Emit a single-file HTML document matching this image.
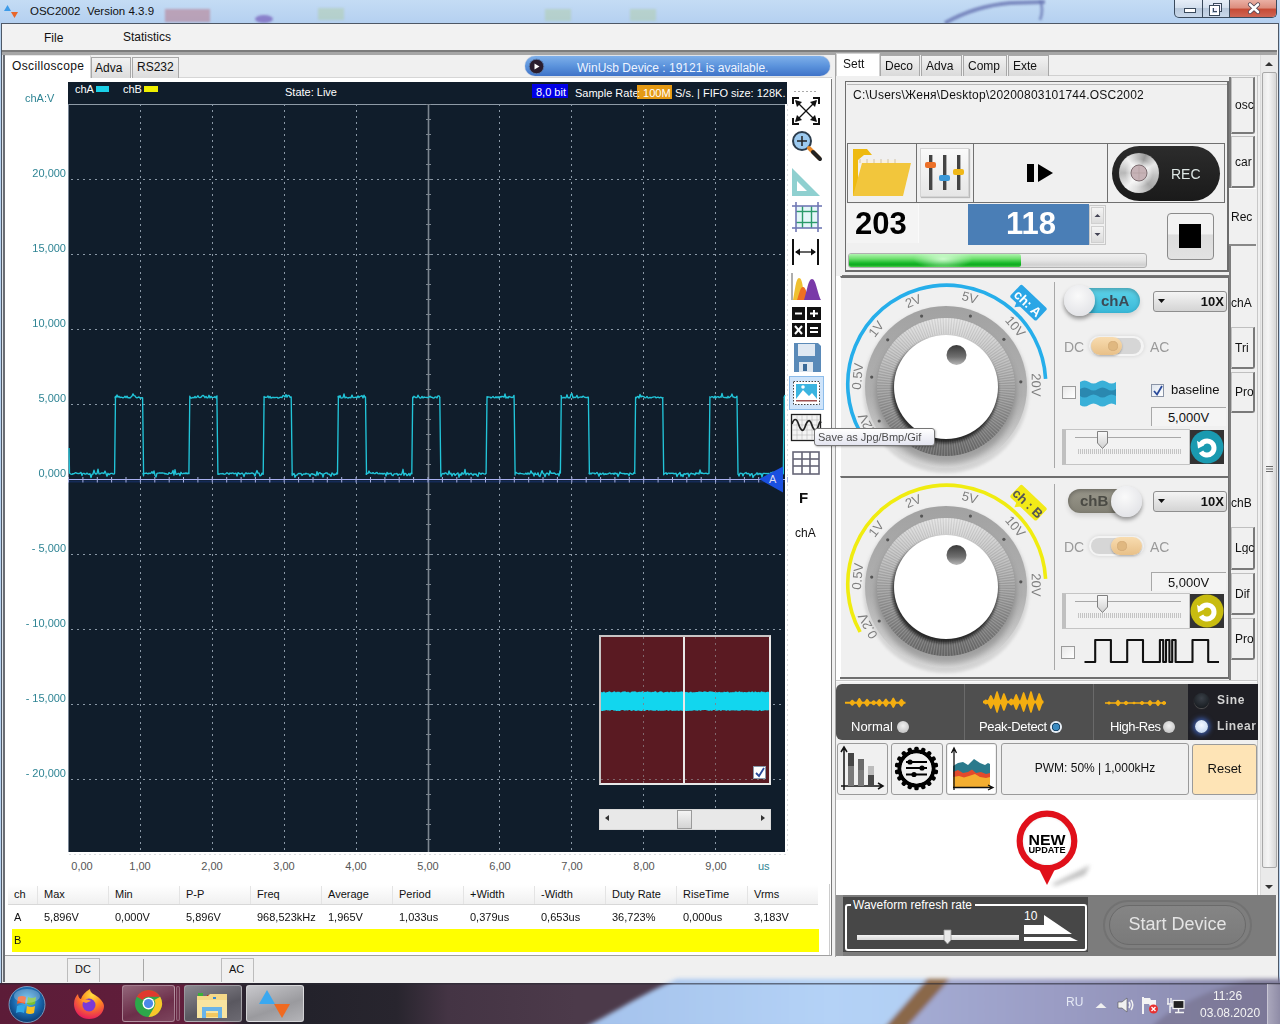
<!DOCTYPE html>
<html><head><meta charset="utf-8">
<style>
*{box-sizing:border-box;margin:0;padding:0}
html,body{width:1280px;height:1024px;overflow:hidden;background:#b6d2f0;font-family:"Liberation Sans",sans-serif;font-size:12px;color:#111}
.a{position:absolute}
.t{position:absolute;white-space:nowrap;line-height:1}
svg{position:absolute;overflow:visible}
</style></head><body>

<div class="a" style="left:0px;top:0px;width:1280px;height:24px;background:linear-gradient(180deg,#c4dcf4 0%,#b4d0f0 100%)"></div>
<svg style="left:0;top:0" width="1280" height="24"><defs><filter id="bl"><feGaussianBlur stdDeviation="1.2"/></filter></defs><g filter="url(#bl)"><rect x="165" y="9" width="45" height="13" fill="#b87888" opacity="0.55"/><ellipse cx="264" cy="19" rx="9" ry="4" fill="#6a4ab0" opacity="0.6"/><rect x="318" y="8" width="26" height="12" fill="#b0cca8" opacity="0.5"/><rect x="545" y="9" width="26" height="12" fill="#b0cca8" opacity="0.5"/><rect x="630" y="9" width="26" height="12" fill="#b0cca8" opacity="0.5"/><path d="M945 23 Q975 6 1010 3 L1045 2" stroke="#6a78b4" stroke-width="4" fill="none" opacity="0.8"/><path d="M1040 0 Q1044 10 1040 20" stroke="#6a78b4" stroke-width="3" fill="none" opacity="0.7"/></g></svg>
<svg style="left:2px;top:4px" width="18" height="18"><path d="M2 7 L5.5 1 L9 7Z" fill="#3d9be9"/><path d="M9 8 L12.5 14 L16 8Z" fill="#e8662a"/></svg>
<div class="t" style="left:30px;top:6px;font-size:11.5px;color:#111;font-weight:normal;">OSC2002&nbsp; Version 4.3.9</div>
<div class="a" style="left:1174px;top:0;width:103px;height:18px;border:1px solid #3a4a5c;border-top:none;border-radius:0 0 5px 5px;overflow:hidden;background:linear-gradient(180deg,#e6eef8 0%,#d4e0ee 45%,#b9c9dc 50%,#c9d8ea 100%)">
<div class="a" style="left:27px;top:0;width:1px;height:18px;background:#3a4a5c"></div>
<div class="a" style="left:54px;top:0;width:48px;height:18px;background:linear-gradient(180deg,#eab0a4 0%,#dc8c7c 45%,#c64a34 50%,#d06a58 100%);border-left:1px solid #3a4a5c"></div>
<div class="a" style="left:9px;top:8px;width:12px;height:5px;background:#fff;border:1px solid #3a4a5c"></div>
<div class="a" style="left:38px;top:3px;width:9px;height:9px;border:1px solid #3a4a5c;background:#eef"></div>
<div class="a" style="left:35px;top:6px;width:9px;height:9px;border:2px solid #fff;outline:1px solid #3a4a5c;background:transparent"></div>
<svg style="left:72px;top:2px" width="14" height="13"><path d="M3 2.5 L11 10 M11 2.5 L3 10" stroke="#4a4050" stroke-width="4.2" stroke-linecap="round"/><path d="M3 2.5 L11 10 M11 2.5 L3 10" stroke="#fff" stroke-width="2.6" stroke-linecap="round"/></svg>
</div>
<div class="a" style="left:1px;top:23px;width:1278px;height:961px;background:#f0f0f0;border:1px solid #4e5866;border-bottom:none"></div>
<div class="a" style="left:2px;top:24px;width:1276px;height:26px;background:#f2f2f2"></div>
<div class="t" style="left:44px;top:32px;font-size:12px;color:#111;font-weight:normal;">File</div>
<div class="t" style="left:123px;top:31px;font-size:12px;color:#111;font-weight:normal;">Statistics</div>
<div class="a" style="left:2px;top:50px;width:1275px;height:2px;background:#7c7c7c"></div>
<div class="a" style="left:2px;top:52px;width:1275px;height:3px;background:#a6a6a6"></div>
<div class="a" style="left:2px;top:55px;width:1px;height:927px;background:#dde2e8"></div>
<div class="a" style="left:3px;top:55px;width:2px;height:927px;background:#6a6e74"></div>
<div class="a" style="left:5px;top:77px;width:827px;height:878px;background:#fff"></div>
<div class="a" style="left:5px;top:55px;width:86px;height:23px;background:#fff;border-right:1px solid #d6d6d6;border-top:1px solid #e6e6e6"></div>
<div class="t" style="left:12px;top:60px;font-size:12px;color:#111;font-weight:normal;letter-spacing:0.35px">Oscilloscope</div>
<div class="a" style="left:91px;top:57px;width:40px;height:21px;background:linear-gradient(180deg,#f2f2f2,#dcdcdc);border:1px solid #a8a8a8;border-bottom:none"></div>
<div class="t" style="left:95px;top:62px;font-size:12px;color:#111;font-weight:normal;">Adva</div>
<div class="a" style="left:132px;top:57px;width:47px;height:21px;background:linear-gradient(180deg,#f2f2f2,#dcdcdc);border:1px solid #a8a8a8;border-bottom:none"></div>
<div class="t" style="left:137px;top:61px;font-size:12px;color:#111;font-weight:normal;">RS232</div>
<div class="a" style="left:179px;top:77px;width:653px;height:1px;background:#d6d6d6"></div>
<div class="a" style="left:525px;top:56px;width:305px;height:20px;border-radius:10px;background:linear-gradient(180deg,#7fb0ea 0%,#5b93dc 50%,#3f73c8 100%);box-shadow:0 0 1px #4a6fb0"></div>
<svg style="left:528px;top:58px" width="17" height="17"><circle cx="8.5" cy="8.5" r="7.3" fill="#2a1d2e" stroke="#5577aa" stroke-width="1"/><path d="M6.5 5.5 L11.5 8.5 L6.5 11.5Z" fill="#fff"/></svg>
<div class="t" style="left:577px;top:62px;font-size:12px;color:#eef4ff;font-weight:normal;">WinUsb Device : 19121 is available.</div>
<div class="a" style="left:831px;top:79px;width:1px;height:876px;background:#7a7a7a"></div>
<div class="a" style="left:835px;top:53px;width:1px;height:904px;background:#a4a4a4"></div>
<div class="a" style="left:5px;top:955px;width:827px;height:27px;background:#f0f0f0;border-top:1px solid #a0a0a0"></div>
<div class="a" style="left:67px;top:958px;width:33px;height:24px;background:#f0f0f0;border:1px solid #bcbcbc;border-bottom:none"></div>
<div class="t" style="left:75px;top:964px;font-size:11px;color:#111;font-weight:normal;">DC</div>
<div class="a" style="left:143px;top:959px;width:1px;height:22px;background:#a8a8a8"></div>
<div class="a" style="left:221px;top:958px;width:33px;height:24px;background:#f0f0f0;border:1px solid #bcbcbc;border-bottom:none"></div>
<div class="t" style="left:229px;top:964px;font-size:11px;color:#111;font-weight:normal;">AC</div>
<div class="a" style="left:68px;top:82px;width:719px;height:22px;background:#101d2b"></div>
<div class="a" style="left:68px;top:104px;width:717px;height:748px;background:#101d2b"></div>
<div class="a" style="left:68px;top:104px;width:1px;height:748px;background:#7a8796"></div>
<div class="a" style="left:69px;top:104px;width:716px;height:1px;background:#8e9aa6"></div>
<svg style="left:0;top:0" width="1280" height="1024"><g stroke="#dadde0" stroke-width="1" stroke-dasharray="2 3"><line x1="69" y1="854.5" x2="787" y2="854.5"/><line x1="787.5" y1="104" x2="787.5" y2="854"/></g></svg>
<div class="t" style="left:75px;top:84px;font-size:11px;color:#fff;font-weight:normal;">chA</div>
<div class="a" style="left:96px;top:86px;width:13px;height:6px;background:#1ad0e8"></div>
<div class="t" style="left:123px;top:84px;font-size:11px;color:#fff;font-weight:normal;">chB</div>
<div class="a" style="left:144px;top:86px;width:14px;height:6px;background:#f0f000"></div>
<div class="t" style="left:285px;top:87px;font-size:11px;color:#fff;font-weight:normal;">State: Live</div>
<div class="a" style="left:532px;top:84px;width:36px;height:14px;background:#0000e6"></div>
<div class="t" style="left:536px;top:87px;font-size:11px;color:#fff;font-weight:normal;">8,0 bit</div>
<div class="t" style="left:575px;top:88px;font-size:11px;color:#fff;font-weight:normal;">Sample Rate</div>
<div class="a" style="left:637px;top:85px;width:35px;height:14px;background:#e59a14"></div>
<div class="t" style="left:637px;top:88px;font-size:11px;color:#fff;font-weight:normal;">:&nbsp;100M</div>
<div class="t" style="left:675px;top:88px;font-size:11px;color:#fff;font-weight:normal;">S/s. | FIFO size: 128K.</div>
<svg style="left:0;top:0" width="1280" height="1024"><line x1="140.5" y1="104" x2="140.5" y2="852" stroke="#8a98a6" stroke-width="1" stroke-dasharray="2 4"/><line x1="212.5" y1="104" x2="212.5" y2="852" stroke="#8a98a6" stroke-width="1" stroke-dasharray="2 4"/><line x1="284.5" y1="104" x2="284.5" y2="852" stroke="#8a98a6" stroke-width="1" stroke-dasharray="2 4"/><line x1="356.5" y1="104" x2="356.5" y2="852" stroke="#8a98a6" stroke-width="1" stroke-dasharray="2 4"/><line x1="428.5" y1="104" x2="428.5" y2="852" stroke="#7c8690" stroke-width="1.6"/><line x1="426.0" y1="104.5" x2="431.0" y2="104.5" stroke="#7c8690" stroke-width="1"/><line x1="426.0" y1="119.5" x2="431.0" y2="119.5" stroke="#7c8690" stroke-width="1"/><line x1="426.0" y1="134.5" x2="431.0" y2="134.5" stroke="#7c8690" stroke-width="1"/><line x1="426.0" y1="149.5" x2="431.0" y2="149.5" stroke="#7c8690" stroke-width="1"/><line x1="426.0" y1="164.5" x2="431.0" y2="164.5" stroke="#7c8690" stroke-width="1"/><line x1="426.0" y1="179.5" x2="431.0" y2="179.5" stroke="#7c8690" stroke-width="1"/><line x1="426.0" y1="194.5" x2="431.0" y2="194.5" stroke="#7c8690" stroke-width="1"/><line x1="426.0" y1="209.5" x2="431.0" y2="209.5" stroke="#7c8690" stroke-width="1"/><line x1="426.0" y1="224.5" x2="431.0" y2="224.5" stroke="#7c8690" stroke-width="1"/><line x1="426.0" y1="239.5" x2="431.0" y2="239.5" stroke="#7c8690" stroke-width="1"/><line x1="426.0" y1="254.5" x2="431.0" y2="254.5" stroke="#7c8690" stroke-width="1"/><line x1="426.0" y1="269.5" x2="431.0" y2="269.5" stroke="#7c8690" stroke-width="1"/><line x1="426.0" y1="284.5" x2="431.0" y2="284.5" stroke="#7c8690" stroke-width="1"/><line x1="426.0" y1="299.5" x2="431.0" y2="299.5" stroke="#7c8690" stroke-width="1"/><line x1="426.0" y1="314.5" x2="431.0" y2="314.5" stroke="#7c8690" stroke-width="1"/><line x1="426.0" y1="329.5" x2="431.0" y2="329.5" stroke="#7c8690" stroke-width="1"/><line x1="426.0" y1="344.5" x2="431.0" y2="344.5" stroke="#7c8690" stroke-width="1"/><line x1="426.0" y1="359.5" x2="431.0" y2="359.5" stroke="#7c8690" stroke-width="1"/><line x1="426.0" y1="374.5" x2="431.0" y2="374.5" stroke="#7c8690" stroke-width="1"/><line x1="426.0" y1="389.5" x2="431.0" y2="389.5" stroke="#7c8690" stroke-width="1"/><line x1="426.0" y1="404.5" x2="431.0" y2="404.5" stroke="#7c8690" stroke-width="1"/><line x1="426.0" y1="419.5" x2="431.0" y2="419.5" stroke="#7c8690" stroke-width="1"/><line x1="426.0" y1="434.5" x2="431.0" y2="434.5" stroke="#7c8690" stroke-width="1"/><line x1="426.0" y1="449.5" x2="431.0" y2="449.5" stroke="#7c8690" stroke-width="1"/><line x1="426.0" y1="464.5" x2="431.0" y2="464.5" stroke="#7c8690" stroke-width="1"/><line x1="426.0" y1="479.5" x2="431.0" y2="479.5" stroke="#7c8690" stroke-width="1"/><line x1="426.0" y1="494.5" x2="431.0" y2="494.5" stroke="#7c8690" stroke-width="1"/><line x1="426.0" y1="509.5" x2="431.0" y2="509.5" stroke="#7c8690" stroke-width="1"/><line x1="426.0" y1="524.5" x2="431.0" y2="524.5" stroke="#7c8690" stroke-width="1"/><line x1="426.0" y1="539.5" x2="431.0" y2="539.5" stroke="#7c8690" stroke-width="1"/><line x1="426.0" y1="554.5" x2="431.0" y2="554.5" stroke="#7c8690" stroke-width="1"/><line x1="426.0" y1="569.5" x2="431.0" y2="569.5" stroke="#7c8690" stroke-width="1"/><line x1="426.0" y1="584.5" x2="431.0" y2="584.5" stroke="#7c8690" stroke-width="1"/><line x1="426.0" y1="599.5" x2="431.0" y2="599.5" stroke="#7c8690" stroke-width="1"/><line x1="426.0" y1="614.5" x2="431.0" y2="614.5" stroke="#7c8690" stroke-width="1"/><line x1="426.0" y1="629.5" x2="431.0" y2="629.5" stroke="#7c8690" stroke-width="1"/><line x1="426.0" y1="644.5" x2="431.0" y2="644.5" stroke="#7c8690" stroke-width="1"/><line x1="426.0" y1="659.5" x2="431.0" y2="659.5" stroke="#7c8690" stroke-width="1"/><line x1="426.0" y1="674.5" x2="431.0" y2="674.5" stroke="#7c8690" stroke-width="1"/><line x1="426.0" y1="689.5" x2="431.0" y2="689.5" stroke="#7c8690" stroke-width="1"/><line x1="426.0" y1="704.5" x2="431.0" y2="704.5" stroke="#7c8690" stroke-width="1"/><line x1="426.0" y1="719.5" x2="431.0" y2="719.5" stroke="#7c8690" stroke-width="1"/><line x1="426.0" y1="734.5" x2="431.0" y2="734.5" stroke="#7c8690" stroke-width="1"/><line x1="426.0" y1="749.5" x2="431.0" y2="749.5" stroke="#7c8690" stroke-width="1"/><line x1="426.0" y1="764.5" x2="431.0" y2="764.5" stroke="#7c8690" stroke-width="1"/><line x1="426.0" y1="779.5" x2="431.0" y2="779.5" stroke="#7c8690" stroke-width="1"/><line x1="426.0" y1="794.5" x2="431.0" y2="794.5" stroke="#7c8690" stroke-width="1"/><line x1="426.0" y1="809.5" x2="431.0" y2="809.5" stroke="#7c8690" stroke-width="1"/><line x1="426.0" y1="824.5" x2="431.0" y2="824.5" stroke="#7c8690" stroke-width="1"/><line x1="426.0" y1="839.5" x2="431.0" y2="839.5" stroke="#7c8690" stroke-width="1"/><line x1="499.5" y1="104" x2="499.5" y2="852" stroke="#8a98a6" stroke-width="1" stroke-dasharray="2 4"/><line x1="571.5" y1="104" x2="571.5" y2="852" stroke="#8a98a6" stroke-width="1" stroke-dasharray="2 4"/><line x1="643.5" y1="104" x2="643.5" y2="852" stroke="#8a98a6" stroke-width="1" stroke-dasharray="2 4"/><line x1="715.5" y1="104" x2="715.5" y2="852" stroke="#8a98a6" stroke-width="1" stroke-dasharray="2 4"/><line x1="71" y1="179.5" x2="785" y2="179.5" stroke="#8a98a6" stroke-width="1" stroke-dasharray="2 4"/><line x1="71" y1="254.5" x2="785" y2="254.5" stroke="#8a98a6" stroke-width="1" stroke-dasharray="2 4"/><line x1="71" y1="329.5" x2="785" y2="329.5" stroke="#8a98a6" stroke-width="1" stroke-dasharray="2 4"/><line x1="71" y1="404.5" x2="785" y2="404.5" stroke="#8a98a6" stroke-width="1" stroke-dasharray="2 4"/><line x1="71" y1="554.5" x2="785" y2="554.5" stroke="#8a98a6" stroke-width="1" stroke-dasharray="2 4"/><line x1="71" y1="629.5" x2="785" y2="629.5" stroke="#8a98a6" stroke-width="1" stroke-dasharray="2 4"/><line x1="71" y1="704.5" x2="785" y2="704.5" stroke="#8a98a6" stroke-width="1" stroke-dasharray="2 4"/><line x1="71" y1="779.5" x2="785" y2="779.5" stroke="#8a98a6" stroke-width="1" stroke-dasharray="2 4"/><line x1="69" y1="481.5" x2="785" y2="481.5" stroke="#1b3a8a" stroke-width="2" opacity="0.45"/><line x1="69" y1="479.5" x2="785" y2="479.5" stroke="#a8b0f0" stroke-width="1.2"/><line x1="68.5" y1="477.0" x2="68.5" y2="482.5" stroke="#a8b0e0" stroke-width="1"/><line x1="82.9" y1="477.0" x2="82.9" y2="482.5" stroke="#a8b0e0" stroke-width="1"/><line x1="97.3" y1="477.0" x2="97.3" y2="482.5" stroke="#a8b0e0" stroke-width="1"/><line x1="111.6" y1="477.0" x2="111.6" y2="482.5" stroke="#a8b0e0" stroke-width="1"/><line x1="126.0" y1="477.0" x2="126.0" y2="482.5" stroke="#a8b0e0" stroke-width="1"/><line x1="140.4" y1="477.0" x2="140.4" y2="482.5" stroke="#a8b0e0" stroke-width="1"/><line x1="154.8" y1="477.0" x2="154.8" y2="482.5" stroke="#a8b0e0" stroke-width="1"/><line x1="169.2" y1="477.0" x2="169.2" y2="482.5" stroke="#a8b0e0" stroke-width="1"/><line x1="183.5" y1="477.0" x2="183.5" y2="482.5" stroke="#a8b0e0" stroke-width="1"/><line x1="197.9" y1="477.0" x2="197.9" y2="482.5" stroke="#a8b0e0" stroke-width="1"/><line x1="212.3" y1="477.0" x2="212.3" y2="482.5" stroke="#a8b0e0" stroke-width="1"/><line x1="226.7" y1="477.0" x2="226.7" y2="482.5" stroke="#a8b0e0" stroke-width="1"/><line x1="241.1" y1="477.0" x2="241.1" y2="482.5" stroke="#a8b0e0" stroke-width="1"/><line x1="255.4" y1="477.0" x2="255.4" y2="482.5" stroke="#a8b0e0" stroke-width="1"/><line x1="269.8" y1="477.0" x2="269.8" y2="482.5" stroke="#a8b0e0" stroke-width="1"/><line x1="284.2" y1="477.0" x2="284.2" y2="482.5" stroke="#a8b0e0" stroke-width="1"/><line x1="298.6" y1="477.0" x2="298.6" y2="482.5" stroke="#a8b0e0" stroke-width="1"/><line x1="313.0" y1="477.0" x2="313.0" y2="482.5" stroke="#a8b0e0" stroke-width="1"/><line x1="327.3" y1="477.0" x2="327.3" y2="482.5" stroke="#a8b0e0" stroke-width="1"/><line x1="341.7" y1="477.0" x2="341.7" y2="482.5" stroke="#a8b0e0" stroke-width="1"/><line x1="356.1" y1="477.0" x2="356.1" y2="482.5" stroke="#a8b0e0" stroke-width="1"/><line x1="370.5" y1="477.0" x2="370.5" y2="482.5" stroke="#a8b0e0" stroke-width="1"/><line x1="384.9" y1="477.0" x2="384.9" y2="482.5" stroke="#a8b0e0" stroke-width="1"/><line x1="399.2" y1="477.0" x2="399.2" y2="482.5" stroke="#a8b0e0" stroke-width="1"/><line x1="413.6" y1="477.0" x2="413.6" y2="482.5" stroke="#a8b0e0" stroke-width="1"/><line x1="428.0" y1="477.0" x2="428.0" y2="482.5" stroke="#a8b0e0" stroke-width="1"/><line x1="442.4" y1="477.0" x2="442.4" y2="482.5" stroke="#a8b0e0" stroke-width="1"/><line x1="456.8" y1="477.0" x2="456.8" y2="482.5" stroke="#a8b0e0" stroke-width="1"/><line x1="471.1" y1="477.0" x2="471.1" y2="482.5" stroke="#a8b0e0" stroke-width="1"/><line x1="485.5" y1="477.0" x2="485.5" y2="482.5" stroke="#a8b0e0" stroke-width="1"/><line x1="499.9" y1="477.0" x2="499.9" y2="482.5" stroke="#a8b0e0" stroke-width="1"/><line x1="514.3" y1="477.0" x2="514.3" y2="482.5" stroke="#a8b0e0" stroke-width="1"/><line x1="528.7" y1="477.0" x2="528.7" y2="482.5" stroke="#a8b0e0" stroke-width="1"/><line x1="543.0" y1="477.0" x2="543.0" y2="482.5" stroke="#a8b0e0" stroke-width="1"/><line x1="557.4" y1="477.0" x2="557.4" y2="482.5" stroke="#a8b0e0" stroke-width="1"/><line x1="571.8" y1="477.0" x2="571.8" y2="482.5" stroke="#a8b0e0" stroke-width="1"/><line x1="586.2" y1="477.0" x2="586.2" y2="482.5" stroke="#a8b0e0" stroke-width="1"/><line x1="600.6" y1="477.0" x2="600.6" y2="482.5" stroke="#a8b0e0" stroke-width="1"/><line x1="614.9" y1="477.0" x2="614.9" y2="482.5" stroke="#a8b0e0" stroke-width="1"/><line x1="629.3" y1="477.0" x2="629.3" y2="482.5" stroke="#a8b0e0" stroke-width="1"/><line x1="643.7" y1="477.0" x2="643.7" y2="482.5" stroke="#a8b0e0" stroke-width="1"/><line x1="658.1" y1="477.0" x2="658.1" y2="482.5" stroke="#a8b0e0" stroke-width="1"/><line x1="672.5" y1="477.0" x2="672.5" y2="482.5" stroke="#a8b0e0" stroke-width="1"/><line x1="686.8" y1="477.0" x2="686.8" y2="482.5" stroke="#a8b0e0" stroke-width="1"/><line x1="701.2" y1="477.0" x2="701.2" y2="482.5" stroke="#a8b0e0" stroke-width="1"/><line x1="715.6" y1="477.0" x2="715.6" y2="482.5" stroke="#a8b0e0" stroke-width="1"/><line x1="730.0" y1="477.0" x2="730.0" y2="482.5" stroke="#a8b0e0" stroke-width="1"/><line x1="744.4" y1="477.0" x2="744.4" y2="482.5" stroke="#a8b0e0" stroke-width="1"/><line x1="758.7" y1="477.0" x2="758.7" y2="482.5" stroke="#a8b0e0" stroke-width="1"/><line x1="773.1" y1="477.0" x2="773.1" y2="482.5" stroke="#a8b0e0" stroke-width="1"/><line x1="787.5" y1="477.0" x2="787.5" y2="482.5" stroke="#a8b0e0" stroke-width="1"/><path d="M69.0 448.0 L69.5 473.0 L70.0 473.5 L71.0 474.1 L72.0 474.4 L73.0 473.6 L74.0 473.8 L75.0 473.0 L76.0 472.7 L77.0 473.4 L78.0 473.5 L79.0 473.6 L80.0 473.2 L81.0 472.4 L82.0 475.6 L83.0 473.3 L84.0 473.3 L85.0 474.1 L86.0 474.1 L87.0 473.1 L88.0 474.0 L89.0 474.3 L90.0 473.7 L91.0 477.6 L92.0 474.3 L93.0 474.0 L94.0 470.2 L95.0 473.4 L96.0 474.1 L97.0 473.7 L98.0 469.2 L99.0 473.9 L100.0 473.9 L101.0 473.2 L102.0 472.9 L103.0 473.2 L104.0 473.5 L105.0 471.1 L106.0 473.4 L107.0 476.2 L108.0 473.3 L109.0 474.7 L110.0 473.9 L111.0 473.4 L112.0 473.3 L113.0 473.9 L114.0 474.1 L114.6 473.2 L115.5 396.3 L115.0 397.9 L116.0 397.6 L117.0 395.0 L118.0 397.1 L119.0 396.3 L120.0 397.6 L121.0 397.2 L122.0 397.4 L123.0 397.9 L124.0 397.4 L125.0 396.2 L126.0 397.7 L127.0 396.1 L128.0 397.8 L129.0 397.6 L130.0 398.0 L131.0 397.1 L132.0 396.0 L133.0 393.9 L134.0 395.7 L135.0 395.9 L136.0 397.4 L137.0 397.8 L138.0 397.4 L139.0 397.0 L140.0 398.0 L141.0 397.7 L142.0 398.0 L142.6 397.7 L143.6 475.8 L143.0 473.4 L144.0 473.4 L145.0 473.5 L146.0 473.0 L147.0 473.4 L148.0 473.9 L149.0 473.1 L150.0 473.6 L151.0 473.2 L152.0 471.7 L153.0 473.5 L154.0 470.9 L155.0 475.5 L156.0 477.0 L157.0 473.3 L158.0 473.1 L159.0 473.0 L160.0 472.8 L161.0 473.2 L162.0 472.8 L163.0 473.0 L164.0 473.1 L165.0 473.9 L166.0 473.5 L167.0 474.1 L168.0 474.4 L169.0 472.7 L170.0 473.3 L171.0 473.6 L172.0 473.1 L173.0 470.5 L174.0 475.2 L175.0 469.7 L176.0 474.2 L177.0 474.2 L178.0 473.5 L179.0 473.4 L180.0 475.6 L181.0 472.3 L182.0 473.7 L183.0 473.8 L184.0 473.1 L185.0 473.8 L186.0 472.8 L187.0 473.9 L188.0 472.9 L189.0 473.4 L188.9 473.7 L189.8 396.1 L190.0 396.9 L191.0 398.0 L192.0 398.0 L193.0 397.4 L194.0 397.9 L195.0 396.4 L196.0 397.8 L197.0 397.0 L198.0 395.8 L199.0 397.3 L200.0 397.6 L201.0 397.2 L202.0 396.0 L203.0 395.4 L204.0 396.1 L205.0 397.7 L206.0 396.4 L207.0 397.9 L208.0 397.8 L209.0 395.3 L210.0 397.9 L211.0 396.4 L212.0 397.6 L213.0 397.4 L214.0 397.4 L215.0 396.5 L216.0 398.0 L217.0 395.9 L216.9 397.7 L217.9 474.2 L218.0 474.3 L219.0 474.0 L220.0 474.0 L221.0 473.5 L222.0 474.0 L223.0 473.4 L224.0 474.3 L225.0 474.2 L226.0 473.6 L227.0 472.7 L228.0 473.4 L229.0 474.3 L230.0 473.0 L231.0 473.5 L232.0 473.1 L233.0 472.9 L234.0 473.8 L235.0 473.4 L236.0 473.2 L237.0 476.0 L238.0 472.7 L239.0 473.3 L240.0 474.1 L241.0 473.7 L242.0 473.0 L243.0 473.9 L244.0 476.5 L245.0 473.7 L246.0 472.8 L247.0 473.9 L248.0 473.2 L249.0 473.7 L250.0 473.5 L251.0 473.4 L252.0 472.9 L253.0 473.3 L254.0 473.9 L255.0 476.1 L256.0 472.9 L257.0 470.5 L258.0 473.2 L259.0 473.1 L260.0 475.9 L261.0 475.4 L262.0 473.1 L263.0 474.4 L263.2 473.9 L264.1 396.4 L264.0 398.0 L265.0 397.1 L266.0 397.3 L267.0 397.2 L268.0 396.0 L269.0 397.9 L270.0 396.4 L271.0 398.1 L272.0 397.5 L273.0 397.3 L274.0 397.5 L275.0 397.7 L276.0 397.4 L277.0 397.3 L278.0 398.1 L279.0 398.0 L280.0 397.3 L281.0 397.1 L282.0 397.6 L283.0 395.5 L284.0 395.9 L285.0 397.0 L286.0 394.6 L287.0 397.2 L288.0 395.3 L289.0 395.4 L290.0 397.3 L291.0 396.8 L291.2 397.1 L292.2 475.5 L292.0 473.4 L293.0 474.4 L294.0 473.4 L295.0 477.3 L296.0 475.1 L297.0 475.1 L298.0 473.8 L299.0 473.3 L300.0 473.6 L301.0 473.5 L302.0 475.5 L303.0 474.4 L304.0 473.9 L305.0 474.2 L306.0 473.2 L307.0 473.9 L308.0 473.9 L309.0 474.2 L310.0 476.4 L311.0 474.1 L312.0 473.6 L313.0 474.5 L314.0 474.1 L315.0 475.3 L316.0 475.7 L317.0 471.6 L318.0 475.1 L319.0 473.0 L320.0 472.7 L321.0 473.9 L322.0 473.6 L323.0 477.1 L324.0 473.7 L325.0 473.4 L326.0 473.0 L327.0 472.8 L328.0 474.2 L329.0 474.1 L330.0 474.9 L331.0 476.3 L332.0 472.9 L333.0 473.8 L334.0 475.2 L335.0 474.0 L336.0 474.5 L337.0 472.5 L337.5 473.9 L338.4 396.1 L338.0 396.9 L339.0 397.7 L340.0 395.6 L341.0 398.1 L342.0 397.9 L343.0 397.6 L344.0 393.9 L345.0 397.9 L346.0 397.2 L347.0 397.7 L348.0 398.0 L349.0 397.6 L350.0 397.5 L351.0 397.8 L352.0 395.1 L353.0 397.6 L354.0 397.6 L355.0 397.3 L356.0 397.1 L357.0 397.8 L358.0 395.9 L359.0 397.6 L360.0 396.3 L361.0 396.1 L362.0 395.6 L363.0 398.0 L364.0 395.1 L365.0 397.4 L365.5 397.0 L366.5 474.4 L366.0 474.0 L367.0 473.5 L368.0 473.4 L369.0 471.0 L370.0 473.0 L371.0 473.0 L372.0 473.5 L373.0 472.6 L374.0 473.5 L375.0 473.6 L376.0 472.9 L377.0 472.5 L378.0 473.7 L379.0 473.8 L380.0 473.2 L381.0 473.9 L382.0 473.3 L383.0 474.1 L384.0 473.4 L385.0 473.4 L386.0 476.1 L387.0 472.4 L388.0 474.2 L389.0 473.3 L390.0 473.7 L391.0 473.1 L392.0 475.2 L393.0 475.7 L394.0 474.0 L395.0 473.8 L396.0 473.9 L397.0 473.5 L398.0 475.4 L399.0 474.1 L400.0 474.2 L401.0 474.9 L402.0 473.5 L403.0 469.3 L404.0 475.3 L405.0 473.4 L406.0 473.7 L407.0 475.6 L408.0 474.9 L409.0 473.5 L410.0 475.6 L411.0 473.1 L412.0 472.9 L411.8 473.8 L412.7 397.2 L413.0 397.8 L414.0 396.2 L415.0 397.2 L416.0 397.7 L417.0 397.5 L418.0 395.2 L419.0 397.1 L420.0 398.0 L421.0 398.0 L422.0 396.4 L423.0 398.0 L424.0 397.0 L425.0 397.3 L426.0 397.3 L427.0 397.5 L428.0 397.7 L429.0 397.2 L430.0 396.1 L431.0 397.2 L432.0 397.2 L433.0 398.0 L434.0 398.0 L435.0 397.1 L436.0 396.9 L437.0 397.9 L438.0 395.8 L439.0 395.8 L440.0 397.8 L439.8 397.8 L440.8 475.6 L441.0 476.6 L442.0 474.0 L443.0 473.4 L444.0 474.0 L445.0 472.9 L446.0 473.0 L447.0 474.0 L448.0 474.7 L449.0 470.9 L450.0 474.0 L451.0 473.2 L452.0 476.1 L453.0 473.8 L454.0 473.4 L455.0 475.4 L456.0 474.4 L457.0 473.5 L458.0 472.9 L459.0 477.2 L460.0 474.0 L461.0 475.3 L462.0 472.6 L463.0 474.0 L464.0 473.8 L465.0 469.4 L466.0 474.8 L467.0 473.4 L468.0 473.2 L469.0 474.9 L470.0 473.7 L471.0 473.3 L472.0 474.3 L473.0 475.3 L474.0 473.8 L475.0 474.5 L476.0 473.9 L477.0 475.7 L478.0 476.4 L479.0 472.7 L480.0 473.4 L481.0 474.3 L482.0 473.2 L483.0 473.4 L484.0 473.9 L485.0 474.2 L486.0 473.3 L486.1 473.5 L487.0 396.6 L487.0 398.0 L488.0 396.8 L489.0 397.1 L490.0 397.1 L491.0 398.0 L492.0 397.3 L493.0 396.5 L494.0 397.6 L495.0 397.8 L496.0 396.7 L497.0 397.9 L498.0 396.6 L499.0 398.0 L500.0 396.6 L501.0 397.1 L502.0 396.3 L503.0 396.7 L504.0 397.2 L505.0 394.0 L506.0 398.0 L507.0 397.1 L508.0 398.1 L509.0 396.4 L510.0 397.0 L511.0 397.2 L512.0 397.6 L513.0 397.1 L514.0 395.4 L514.1 397.2 L515.1 475.0 L515.0 473.4 L516.0 472.4 L517.0 473.2 L518.0 473.4 L519.0 473.9 L520.0 473.1 L521.0 473.7 L522.0 473.6 L523.0 473.8 L524.0 474.1 L525.0 474.0 L526.0 473.1 L527.0 474.3 L528.0 472.8 L529.0 474.2 L530.0 473.6 L531.0 470.8 L532.0 473.3 L533.0 473.2 L534.0 476.0 L535.0 473.0 L536.0 474.3 L537.0 474.7 L538.0 472.8 L539.0 476.0 L540.0 476.6 L541.0 473.5 L542.0 470.6 L543.0 473.2 L544.0 474.1 L545.0 476.7 L546.0 473.7 L547.0 473.0 L548.0 473.6 L549.0 475.2 L550.0 470.8 L551.0 473.3 L552.0 473.1 L553.0 473.3 L554.0 473.0 L555.0 473.4 L556.0 474.4 L557.0 474.2 L558.0 473.8 L559.0 476.0 L560.0 470.6 L560.4 473.0 L561.3 396.4 L561.0 395.6 L562.0 397.8 L563.0 397.9 L564.0 397.2 L565.0 397.9 L566.0 397.8 L567.0 394.8 L568.0 397.9 L569.0 397.7 L570.0 397.9 L571.0 394.3 L572.0 393.7 L573.0 397.9 L574.0 397.1 L575.0 397.6 L576.0 397.1 L577.0 395.4 L578.0 398.0 L579.0 397.3 L580.0 397.1 L581.0 396.9 L582.0 397.4 L583.0 396.1 L584.0 396.8 L585.0 397.3 L586.0 397.5 L587.0 397.7 L588.0 397.0 L588.4 397.4 L589.4 474.1 L589.0 473.1 L590.0 473.0 L591.0 474.1 L592.0 472.9 L593.0 473.1 L594.0 473.1 L595.0 473.9 L596.0 473.3 L597.0 472.4 L598.0 473.8 L599.0 476.2 L600.0 473.2 L601.0 474.4 L602.0 473.8 L603.0 473.0 L604.0 474.7 L605.0 473.6 L606.0 474.4 L607.0 474.0 L608.0 473.9 L609.0 473.2 L610.0 473.0 L611.0 473.9 L612.0 473.6 L613.0 473.3 L614.0 474.4 L615.0 472.9 L616.0 473.8 L617.0 473.3 L618.0 476.5 L619.0 474.2 L620.0 472.1 L621.0 473.3 L622.0 473.4 L623.0 473.7 L624.0 473.4 L625.0 474.1 L626.0 473.7 L627.0 473.7 L628.0 473.8 L629.0 475.7 L630.0 473.0 L631.0 473.5 L632.0 474.3 L633.0 474.2 L634.0 472.6 L635.0 473.3 L634.7 473.4 L635.6 397.3 L636.0 398.1 L637.0 396.9 L638.0 396.4 L639.0 398.1 L640.0 394.4 L641.0 397.0 L642.0 396.0 L643.0 396.5 L644.0 396.8 L645.0 397.8 L646.0 397.6 L647.0 396.4 L648.0 398.0 L649.0 397.9 L650.0 397.3 L651.0 398.0 L652.0 397.4 L653.0 397.1 L654.0 396.9 L655.0 396.8 L656.0 397.9 L657.0 397.3 L658.0 397.1 L659.0 397.7 L660.0 397.7 L661.0 397.2 L662.0 398.0 L663.0 397.7 L662.7 397.6 L663.7 474.8 L664.0 474.0 L665.0 473.4 L666.0 472.7 L667.0 474.4 L668.0 473.1 L669.0 473.1 L670.0 473.6 L671.0 473.1 L672.0 473.4 L673.0 473.2 L674.0 473.8 L675.0 473.5 L676.0 473.3 L677.0 476.6 L678.0 474.3 L679.0 473.7 L680.0 472.5 L681.0 476.1 L682.0 474.6 L683.0 476.6 L684.0 473.6 L685.0 474.3 L686.0 473.8 L687.0 473.5 L688.0 473.3 L689.0 476.7 L690.0 474.2 L691.0 473.2 L692.0 473.7 L693.0 473.7 L694.0 474.1 L695.0 474.9 L696.0 472.8 L697.0 473.8 L698.0 473.1 L699.0 474.0 L700.0 469.9 L701.0 473.3 L702.0 473.0 L703.0 473.3 L704.0 473.7 L705.0 473.3 L706.0 473.2 L707.0 473.7 L708.0 473.7 L709.0 473.1 L709.0 473.6 L709.9 396.8 L710.0 397.3 L711.0 397.1 L712.0 396.7 L713.0 396.9 L714.0 397.9 L715.0 396.1 L716.0 397.9 L717.0 396.8 L718.0 396.6 L719.0 397.6 L720.0 397.0 L721.0 397.2 L722.0 393.5 L723.0 397.1 L724.0 397.3 L725.0 397.6 L726.0 397.3 L727.0 398.0 L728.0 396.3 L729.0 397.8 L730.0 397.0 L731.0 396.3 L732.0 394.0 L733.0 397.1 L734.0 397.0 L735.0 397.7 L736.0 397.3 L737.0 396.2 L737.0 397.4 L738.0 474.2 L738.0 473.7 L739.0 476.1 L740.0 473.1 L741.0 473.3 L742.0 473.3 L743.0 475.9 L744.0 473.6 L745.0 473.2 L746.0 472.5 L747.0 473.8 L748.0 473.5 L749.0 473.7 L750.0 475.9 L751.0 474.0 L752.0 473.6 L753.0 477.5 L754.0 475.5 L755.0 474.8 L756.0 474.2 L757.0 472.8 L758.0 474.7 L759.0 473.3 L760.0 474.1 L761.0 473.4 L762.0 477.0 L763.0 473.4 L764.0 473.3 L765.0 473.4 L766.0 473.6 L767.0 473.4 L768.0 474.0 L769.0 473.3 L770.0 477.4 L771.0 472.5 L772.0 473.1 L773.0 472.1 L774.0 473.2 L775.0 473.8 L776.0 473.2 L777.0 474.1 L778.0 473.4 L779.0 473.2 L780.0 472.6 L781.0 472.7 L782.0 472.8 L783.0 473.4 L783.3 473.8 L784.2 397.3 L784.0 397.7 L785.0 394.9" fill="none" stroke="#22c4d8" stroke-width="1.35" stroke-linejoin="round"/><path d="M759 479 L783 466.5 L783 492.5Z" fill="#1a50e0"/><text x="769" y="483" font-size="11" fill="#dde" font-family="Liberation Sans">A</text></svg>
<div class="t" style="left:0;width:66px;text-align:right;top:168px;font-size:11px;color:#2e8494">20,000</div>
<div class="t" style="left:0;width:66px;text-align:right;top:243px;font-size:11px;color:#2e8494">15,000</div>
<div class="t" style="left:0;width:66px;text-align:right;top:318px;font-size:11px;color:#2e8494">10,000</div>
<div class="t" style="left:0;width:66px;text-align:right;top:393px;font-size:11px;color:#2e8494">5,000</div>
<div class="t" style="left:0;width:66px;text-align:right;top:468px;font-size:11px;color:#2e8494">0,000</div>
<div class="t" style="left:0;width:66px;text-align:right;top:543px;font-size:11px;color:#2e8494">- 5,000</div>
<div class="t" style="left:0;width:66px;text-align:right;top:618px;font-size:11px;color:#2e8494">- 10,000</div>
<div class="t" style="left:0;width:66px;text-align:right;top:693px;font-size:11px;color:#2e8494">- 15,000</div>
<div class="t" style="left:0;width:66px;text-align:right;top:768px;font-size:11px;color:#2e8494">- 20,000</div>
<div class="t" style="left:25px;top:93px;font-size:11px;color:#2e8494;font-weight:normal;">chA:V</div>
<div class="t" style="left:62px;width:40px;text-align:center;top:861px;font-size:11px;color:#555">0,00</div>
<div class="t" style="left:120px;width:40px;text-align:center;top:861px;font-size:11px;color:#555">1,00</div>
<div class="t" style="left:192px;width:40px;text-align:center;top:861px;font-size:11px;color:#555">2,00</div>
<div class="t" style="left:264px;width:40px;text-align:center;top:861px;font-size:11px;color:#555">3,00</div>
<div class="t" style="left:336px;width:40px;text-align:center;top:861px;font-size:11px;color:#555">4,00</div>
<div class="t" style="left:408px;width:40px;text-align:center;top:861px;font-size:11px;color:#555">5,00</div>
<div class="t" style="left:480px;width:40px;text-align:center;top:861px;font-size:11px;color:#555">6,00</div>
<div class="t" style="left:552px;width:40px;text-align:center;top:861px;font-size:11px;color:#555">7,00</div>
<div class="t" style="left:624px;width:40px;text-align:center;top:861px;font-size:11px;color:#555">8,00</div>
<div class="t" style="left:696px;width:40px;text-align:center;top:861px;font-size:11px;color:#555">9,00</div>
<div class="t" style="left:758px;top:861px;font-size:11px;color:#2e8494;font-weight:normal;">us</div>
<div class="a" style="left:599px;top:635px;width:172px;height:150px;background:#5a1a22;border:2px solid #e8e8e8;border-top-color:#c8c4c4;border-left-color:#c8c4c4"></div>
<svg style="left:0;top:0" width="1280" height="1024"><path d="M601 692.1 L602 692.3 L603 692.2 L604 691.2 L605 692.5 L606 692.5 L607 691.9 L608 692.0 L609 691.2 L610 691.6 L611 692.3 L612 692.3 L613 692.1 L614 691.2 L615 691.5 L616 692.6 L617 691.6 L618 692.0 L619 691.5 L620 692.2 L621 692.5 L622 691.7 L623 691.4 L624 691.6 L625 691.2 L626 691.7 L627 692.3 L628 691.6 L629 692.2 L630 692.6 L631 692.2 L632 691.2 L633 691.7 L634 691.2 L635 691.5 L636 691.5 L637 692.5 L638 691.7 L639 691.9 L640 691.4 L641 692.3 L642 691.3 L643 691.3 L644 692.1 L645 691.7 L646 692.0 L647 691.6 L648 691.3 L649 692.2 L650 691.4 L651 692.6 L652 691.8 L653 692.0 L654 691.8 L655 691.3 L656 691.2 L657 692.4 L658 692.2 L659 692.1 L660 691.3 L661 691.4 L662 691.6 L663 692.6 L664 692.6 L665 691.9 L666 691.9 L667 691.8 L668 691.7 L669 692.5 L670 691.9 L671 691.3 L672 692.3 L673 691.7 L674 692.3 L675 692.1 L676 691.7 L677 691.6 L678 692.3 L679 691.6 L680 692.1 L681 691.2 L682 691.6 L683 691.8 L684 692.1 L685 691.7 L686 692.2 L687 691.7 L688 692.4 L689 692.6 L690 691.9 L691 691.4 L692 692.5 L693 692.2 L694 692.2 L695 692.3 L696 692.1 L697 692.1 L698 692.1 L699 691.2 L700 691.8 L701 691.5 L702 692.1 L703 691.9 L704 691.3 L705 691.6 L706 691.5 L707 691.9 L708 692.1 L709 691.5 L710 691.2 L711 691.6 L712 691.4 L713 691.7 L714 692.1 L715 692.0 L716 692.0 L717 692.3 L718 692.3 L719 691.7 L720 692.0 L721 692.5 L722 692.1 L723 692.5 L724 691.4 L725 692.1 L726 692.1 L727 691.7 L728 691.5 L729 692.6 L730 692.5 L731 692.0 L732 692.6 L733 691.8 L734 692.6 L735 691.6 L736 691.4 L737 691.8 L738 692.3 L739 691.2 L740 691.6 L741 692.3 L742 691.6 L743 692.6 L744 692.1 L745 692.1 L746 692.2 L747 692.3 L748 691.9 L749 691.6 L750 691.9 L751 692.2 L752 691.3 L753 691.8 L754 692.4 L755 691.2 L756 691.8 L757 692.2 L758 691.9 L759 691.7 L760 692.4 L761 691.6 L762 691.3 L763 692.2 L764 691.6 L765 692.5 L766 691.9 L767 691.9 L768 691.4 L769 692.3 L769 710.0 L768 710.6 L767 710.3 L766 710.6 L765 710.1 L764 710.8 L763 710.4 L762 710.9 L761 710.9 L760 710.1 L759 710.4 L758 711.0 L757 710.7 L756 710.6 L755 710.8 L754 710.6 L753 711.0 L752 710.2 L751 710.6 L750 710.3 L749 710.5 L748 710.3 L747 710.3 L746 710.0 L745 710.6 L744 710.5 L743 710.3 L742 710.1 L741 710.2 L740 711.0 L739 710.5 L738 710.9 L737 710.3 L736 710.6 L735 710.5 L734 710.5 L733 710.3 L732 710.5 L731 710.2 L730 711.0 L729 710.4 L728 710.2 L727 710.4 L726 711.0 L725 710.1 L724 710.6 L723 709.9 L722 710.3 L721 711.1 L720 710.6 L719 710.1 L718 710.7 L717 710.4 L716 711.0 L715 710.3 L714 710.0 L713 709.9 L712 710.9 L711 710.4 L710 710.4 L709 711.0 L708 710.6 L707 710.4 L706 709.9 L705 710.1 L704 710.1 L703 710.2 L702 710.0 L701 710.7 L700 710.7 L699 710.1 L698 710.8 L697 710.8 L696 710.4 L695 710.6 L694 710.1 L693 710.8 L692 710.5 L691 710.9 L690 710.5 L689 711.0 L688 710.7 L687 710.9 L686 710.9 L685 710.7 L684 710.9 L683 710.9 L682 710.7 L681 710.6 L680 710.6 L679 711.0 L678 710.7 L677 710.5 L676 710.7 L675 710.8 L674 710.7 L673 710.8 L672 710.9 L671 710.2 L670 710.3 L669 710.7 L668 711.1 L667 710.1 L666 710.2 L665 710.8 L664 710.4 L663 710.9 L662 710.4 L661 710.9 L660 710.4 L659 710.8 L658 711.0 L657 710.1 L656 710.5 L655 711.0 L654 710.4 L653 710.9 L652 710.2 L651 710.5 L650 710.0 L649 711.1 L648 710.1 L647 710.1 L646 710.3 L645 711.0 L644 711.0 L643 710.3 L642 711.0 L641 710.9 L640 710.8 L639 710.8 L638 710.3 L637 711.0 L636 710.8 L635 711.0 L634 710.0 L633 710.6 L632 710.8 L631 710.9 L630 709.9 L629 710.0 L628 710.5 L627 710.5 L626 710.3 L625 710.7 L624 710.6 L623 710.0 L622 710.1 L621 710.3 L620 711.1 L619 711.0 L618 710.7 L617 711.1 L616 710.9 L615 710.2 L614 710.9 L613 710.1 L612 710.1 L611 710.1 L610 711.0 L609 710.2 L608 710.6 L607 710.2 L606 710.0 L605 710.7 L604 710.5 L603 711.0 L602 711.0 L601 710.8Z" fill="#12d6ee"/><g stroke="#8a7a80" stroke-width="1" stroke-dasharray="2 4" opacity="0.8"><line x1="643.5" y1="637" x2="643.5" y2="783"/><line x1="715.5" y1="637" x2="715.5" y2="783"/><line x1="601" y1="779.5" x2="769" y2="779.5"/></g></svg>
<div class="a" style="left:683px;top:637px;width:2px;height:146px;background:#e8e8e8"></div>
<div class="a" style="left:753px;top:766px;width:13px;height:13px;background:#fff;border:1px solid #8899aa"></div>
<svg style="left:754px;top:767px" width="12" height="12"><path d="M2 6 L5 9 L10 1" stroke="#2a4a9a" stroke-width="1.8" fill="none"/></svg>
<div class="a" style="left:599px;top:809px;width:172px;height:21px;background:#e8e8e8;border:1px solid #dadada"></div>
<svg style="left:603px;top:813px" width="10" height="10"><path d="M6 2 L2 5 L6 8Z" fill="#333"/></svg>
<svg style="left:758px;top:813px" width="10" height="10"><path d="M3 2 L7 5 L3 8Z" fill="#333"/></svg>
<div class="a" style="left:677px;top:810px;width:15px;height:19px;background:linear-gradient(180deg,#f4f4f4,#d4d4d4);border:1px solid #9a9a9a"></div>
<svg style="left:0;top:0" width="1280" height="1024"><line x1="794" y1="91.5" x2="818" y2="91.5" stroke="#aaa" stroke-width="1" stroke-dasharray="2 2"/><g stroke="#111" stroke-width="2" fill="none"><path d="M793 104 V98 H799"/><path d="M813 98 H819 V104"/><path d="M793 118 V124 H799"/><path d="M813 124 H819 V118"/></g><g stroke="#111" stroke-width="1.2"><line x1="796" y1="101" x2="816" y2="121"/><line x1="816" y1="101" x2="796" y2="121"/></g><g fill="#111"><path d="M795 100 L802 102 L797 107Z"/><path d="M817 100 L815 107 L810 102Z"/><path d="M795 122 L797 115 L802 120Z"/><path d="M817 122 L810 120 L815 115Z"/></g><circle cx="802" cy="141" r="9" fill="#9ccaf0" stroke="#2c3c4c" stroke-width="2"/><path d="M797 141 H807 M802 136 V146" stroke="#222" stroke-width="1.5"/><path d="M809 148 L819 158" stroke="#e88a2a" stroke-width="4" stroke-linecap="round"/><path d="M813 152 L820 159" stroke="#222" stroke-width="4" stroke-linecap="round"/><path d="M792 168 L820 196 H792Z M797 181 L797 191 H807Z" fill="#8fd0d0" fill-rule="evenodd"/><rect x="796" y="206" width="22" height="22" fill="#e4f6f8"/><g stroke="#2a9a6a" stroke-width="1.4"><line x1="796" y1="211.5" x2="818" y2="211.5"/><line x1="796" y1="222.5" x2="818" y2="222.5"/><line x1="802.5" y1="206" x2="802.5" y2="228"/><line x1="811.5" y1="206" x2="811.5" y2="228"/></g><g stroke="#7078b4" stroke-width="1.6"><line x1="792" y1="206" x2="822" y2="206"/><line x1="792" y1="228" x2="822" y2="228"/><line x1="796" y1="202" x2="796" y2="232"/><line x1="818" y1="202" x2="818" y2="232"/></g><g stroke="#111" stroke-width="2"><line x1="793" y1="239" x2="793" y2="265"/><line x1="818" y1="239" x2="818" y2="265"/></g><line x1="796" y1="252" x2="815" y2="252" stroke="#111" stroke-width="1.3"/><path d="M795 252 L800 248.5 V255.5Z M816 252 L811 248.5 V255.5Z" fill="#111"/><path d="M792 300 V273" stroke="#333" stroke-width="0.8"/><path d="M793 300 C795 290 796 278 799 278 C803 278 803 292 805 300Z" fill="#f0c030"/><path d="M797 300 C799 295 800 287 803 287 C806 287 807 295 809 300Z" fill="#f07020"/><path d="M804 300 C807 292 808 279 812 279 C816 279 817 292 821 300Z" fill="#7a3aa8"/><g fill="#111"><rect x="792" y="307" width="13" height="13"/><rect x="807" y="307" width="14" height="13"/><rect x="792" y="323" width="13" height="14"/><rect x="807" y="323" width="14" height="14"/></g><g stroke="#fff" stroke-width="2"><line x1="795" y1="313.5" x2="802" y2="313.5"/><line x1="810" y1="313.5" x2="818" y2="313.5"/><line x1="814" y1="310" x2="814" y2="317"/><line x1="795" y1="326" x2="802" y2="334"/><line x1="802" y1="326" x2="795" y2="334"/><line x1="810" y1="328" x2="818" y2="328"/><line x1="810" y1="332" x2="818" y2="332"/></g><path d="M794 343 H818 L821 346 V372 H794Z" fill="#5a8ab8"/><rect x="798" y="344" width="17" height="12" fill="#dfe8f2"/><rect x="799" y="362" width="14" height="10" fill="#dde6ef"/><rect x="803" y="364" width="4" height="7" fill="#3a6a98"/><rect x="789.5" y="376.5" width="34" height="33" fill="#cfe4fa" stroke="#8cbcea"/><rect x="793.5" y="381.5" width="26" height="23" fill="#fff" stroke="#444" stroke-dasharray="1.5 1.5"/><rect x="796" y="384" width="21" height="15" fill="#3ab4e0"/><path d="M796 399 L803 390 L809 396 L812 393 L817 399Z" fill="#fff"/><circle cx="803" cy="387" r="1.8" fill="#fff"/><rect x="796" y="400" width="21" height="1.5" fill="#a05050"/><rect x="791.5" y="414.5" width="29" height="26" fill="#f4f4f4" stroke="#222" stroke-width="1.3"/><g stroke="#bbb" stroke-width="0.6"><line x1="797" y1="415" x2="797" y2="440"/><line x1="802" y1="415" x2="802" y2="440"/><line x1="807" y1="415" x2="807" y2="440"/><line x1="812" y1="415" x2="812" y2="440"/><line x1="817" y1="415" x2="817" y2="440"/><line x1="792" y1="420" x2="820" y2="420"/><line x1="792" y1="425" x2="820" y2="425"/><line x1="792" y1="430" x2="820" y2="430"/><line x1="792" y1="435" x2="820" y2="435"/></g><path d="M792 424 C794 418 796.5 418 798.5 424 S803 433 805 427 S809.5 418 811.5 424 S816 433 818 427 S820 421 821 423" stroke="#222" stroke-width="1.7" fill="none"/><g stroke="#667" stroke-width="1.6" fill="none"><rect x="793" y="452" width="26" height="22"/><line x1="793" y1="459" x2="819" y2="459"/><line x1="793" y1="466" x2="819" y2="466"/><line x1="802" y1="452" x2="802" y2="474"/><line x1="810" y1="452" x2="810" y2="474"/></g></svg>
<div class="t" style="left:799px;top:490px;font-size:15px;color:#111;font-weight:bold;">F</div>
<div class="t" style="left:795px;top:527px;font-size:12px;color:#111;font-weight:normal;">chA</div>
<div class="a" style="left:8px;top:884px;width:822px;height:71px;background:#fff"></div>
<div class="a" style="left:8px;top:885px;width:810px;height:20px;background:linear-gradient(180deg,#fff 0%,#f0f0f0 100%);border-bottom:1px solid #d8d8d8"></div>
<div class="t" style="left:14px;top:889px;font-size:11px;color:#111;font-weight:normal;">ch</div>
<div class="t" style="left:44px;top:889px;font-size:11px;color:#111;font-weight:normal;">Max</div>
<div class="t" style="left:115px;top:889px;font-size:11px;color:#111;font-weight:normal;">Min</div>
<div class="t" style="left:186px;top:889px;font-size:11px;color:#111;font-weight:normal;">P-P</div>
<div class="t" style="left:257px;top:889px;font-size:11px;color:#111;font-weight:normal;">Freq</div>
<div class="t" style="left:328px;top:889px;font-size:11px;color:#111;font-weight:normal;">Average</div>
<div class="t" style="left:399px;top:889px;font-size:11px;color:#111;font-weight:normal;">Period</div>
<div class="t" style="left:470px;top:889px;font-size:11px;color:#111;font-weight:normal;">+Width</div>
<div class="t" style="left:541px;top:889px;font-size:11px;color:#111;font-weight:normal;">-Width</div>
<div class="t" style="left:612px;top:889px;font-size:11px;color:#111;font-weight:normal;">Duty Rate</div>
<div class="t" style="left:683px;top:889px;font-size:11px;color:#111;font-weight:normal;">RiseTime</div>
<div class="t" style="left:754px;top:889px;font-size:11px;color:#111;font-weight:normal;">Vrms</div>
<div class="a" style="left:37px;top:886px;width:1px;height:18px;background:#e4e4e4"></div>
<div class="a" style="left:108px;top:886px;width:1px;height:18px;background:#e4e4e4"></div>
<div class="a" style="left:179px;top:886px;width:1px;height:18px;background:#e4e4e4"></div>
<div class="a" style="left:250px;top:886px;width:1px;height:18px;background:#e4e4e4"></div>
<div class="a" style="left:321px;top:886px;width:1px;height:18px;background:#e4e4e4"></div>
<div class="a" style="left:392px;top:886px;width:1px;height:18px;background:#e4e4e4"></div>
<div class="a" style="left:463px;top:886px;width:1px;height:18px;background:#e4e4e4"></div>
<div class="a" style="left:534px;top:886px;width:1px;height:18px;background:#e4e4e4"></div>
<div class="a" style="left:605px;top:886px;width:1px;height:18px;background:#e4e4e4"></div>
<div class="a" style="left:676px;top:886px;width:1px;height:18px;background:#e4e4e4"></div>
<div class="a" style="left:747px;top:886px;width:1px;height:18px;background:#e4e4e4"></div>
<div class="t" style="left:14px;top:912px;font-size:11px;color:#111;font-weight:normal;">A</div>
<div class="t" style="left:44px;top:912px;font-size:11px;color:#111;font-weight:normal;">5,896V</div>
<div class="t" style="left:115px;top:912px;font-size:11px;color:#111;font-weight:normal;">0,000V</div>
<div class="t" style="left:186px;top:912px;font-size:11px;color:#111;font-weight:normal;">5,896V</div>
<div class="t" style="left:257px;top:912px;font-size:11px;color:#111;font-weight:normal;">968,523kHz</div>
<div class="t" style="left:328px;top:912px;font-size:11px;color:#111;font-weight:normal;">1,965V</div>
<div class="t" style="left:399px;top:912px;font-size:11px;color:#111;font-weight:normal;">1,033us</div>
<div class="t" style="left:470px;top:912px;font-size:11px;color:#111;font-weight:normal;">0,379us</div>
<div class="t" style="left:541px;top:912px;font-size:11px;color:#111;font-weight:normal;">0,653us</div>
<div class="t" style="left:612px;top:912px;font-size:11px;color:#111;font-weight:normal;">36,723%</div>
<div class="t" style="left:683px;top:912px;font-size:11px;color:#111;font-weight:normal;">0,000us</div>
<div class="t" style="left:754px;top:912px;font-size:11px;color:#111;font-weight:normal;">3,183V</div>
<div class="a" style="left:12px;top:929px;width:807px;height:23px;background:#ffff00"></div>
<div class="t" style="left:14px;top:935px;font-size:11px;color:#111;font-weight:normal;">B</div>
<div class="a" style="left:829px;top:884px;width:1px;height:71px;background:#ccc"></div>
<div class="a" style="left:836px;top:53px;width:44px;height:24px;background:#fff;border:1px solid #d0d0d0;border-bottom:none"></div>
<div class="t" style="left:843px;top:58px;font-size:12px;color:#111;font-weight:normal;">Sett</div>
<div class="a" style="left:880px;top:55px;width:40px;height:21px;background:linear-gradient(180deg,#f2f2f2,#dadada);border:1px solid #a8a8a8;border-bottom:none"></div>
<div class="t" style="left:885px;top:60px;font-size:12px;color:#111;font-weight:normal;">Deco</div>
<div class="a" style="left:921px;top:55px;width:41px;height:21px;background:linear-gradient(180deg,#f2f2f2,#dadada);border:1px solid #a8a8a8;border-bottom:none"></div>
<div class="t" style="left:926px;top:60px;font-size:12px;color:#111;font-weight:normal;">Adva</div>
<div class="a" style="left:963px;top:55px;width:44px;height:21px;background:linear-gradient(180deg,#f2f2f2,#dadada);border:1px solid #a8a8a8;border-bottom:none"></div>
<div class="t" style="left:968px;top:60px;font-size:12px;color:#111;font-weight:normal;">Comp</div>
<div class="a" style="left:1008px;top:55px;width:41px;height:21px;background:linear-gradient(180deg,#f2f2f2,#dadada);border:1px solid #a8a8a8;border-bottom:none"></div>
<div class="t" style="left:1013px;top:60px;font-size:12px;color:#111;font-weight:normal;">Exte</div>
<div class="a" style="left:1049px;top:75px;width:212px;height:1px;background:#d0d0d0"></div>
<div class="a" style="left:836px;top:76px;width:425px;height:819px;background:#f0f0f0"></div>
<div class="a" style="left:836px;top:800px;width:425px;height:95px;background:#fff"></div>
<div class="a" style="left:845px;top:81px;width:384px;height:191px;border:1px solid #6c6c6c;border-right:2px solid #6c6c6c;border-bottom:2px solid #6c6c6c;background:#f0f0f0"></div>
<div class="a" style="left:847px;top:84px;width:380px;height:59px;border-top:1px solid #b8b8b8"></div>
<div class="a" style="left:842px;top:275px;width:388px;height:1px;background:#777"></div>
<div class="t" style="left:853px;top:89px;font-size:12px;color:#111;font-weight:normal;letter-spacing:0.23px">C:\Users\Женя\Desktop\20200803101744.OSC2002</div>
<div class="a" style="left:847px;top:143px;width:378px;height:1px;background:#707070"></div>
<div class="a" style="left:847px;top:202px;width:378px;height:1px;background:#707070"></div>
<div class="a" style="left:916px;top:143px;width:1px;height:59px;background:#707070"></div>
<div class="a" style="left:973px;top:143px;width:1px;height:59px;background:#707070"></div>
<div class="a" style="left:1107px;top:143px;width:1px;height:59px;background:#707070"></div>
<div class="a" style="left:1224px;top:143px;width:1px;height:59px;background:#707070"></div>
<div class="a" style="left:847px;top:143px;width:1px;height:59px;background:#707070"></div>
<svg style="left:850px;top:146px" width="64" height="54"><path d="M3 3 H17 L22 9 H14 L8 14 V50 H3Z" fill="#eeba10"/><path d="M8 14 H50 V18 H8Z" fill="#f8f0e0"/><g stroke="#c8b898" stroke-width="0.8"><line x1="10" y1="13" x2="10" y2="17"/><line x1="17" y1="13" x2="17" y2="17"/><line x1="24" y1="13" x2="24" y2="17"/><line x1="31" y1="13" x2="31" y2="17"/><line x1="38" y1="13" x2="38" y2="17"/><line x1="45" y1="13" x2="45" y2="17"/></g><path d="M3 50 L12 17 H61 L53 50Z" fill="#f2c63c"/></svg>
<div class="a" style="left:920px;top:148px;width:49px;height:49px;background:linear-gradient(180deg,#fafafa,#e6e6e6);border:1px solid #d4d4d4;box-shadow:1px 1px 1px #bbb"></div>
<svg style="left:920px;top:148px" width="49" height="49"><g fill="#444"><rect x="9" y="7" width="3.4" height="35"/><rect x="23" y="7" width="3.4" height="35"/><rect x="37" y="7" width="3.4" height="35"/></g><rect x="5" y="14" width="11" height="6" rx="2" fill="#ec7028"/><rect x="19" y="27" width="11" height="6" rx="2" fill="#3a98d8"/><rect x="33" y="21" width="11" height="6" rx="2" fill="#f0b818"/></svg>
<svg style="left:1020px;top:160px" width="40" height="26"><rect x="7" y="4" width="7" height="18" fill="#000"/><path d="M18 4 L33 13 L18 22Z" fill="#000"/></svg>
<svg style="left:1110px;top:144px" width="114" height="58"><defs><radialGradient id="silver" cx="50%" cy="50%" r="50%"><stop offset="0" stop-color="#f4f4f4"/><stop offset="0.6" stop-color="#c8c8c8"/><stop offset="1" stop-color="#9a9a9a"/></radialGradient><linearGradient id="recbg" x1="0" y1="0" x2="0" y2="1"><stop offset="0" stop-color="#2c2c2c"/><stop offset="1" stop-color="#1a1a1a"/></linearGradient></defs>
<rect x="2" y="2" width="108" height="55" rx="27.5" fill="url(#recbg)"/>
<text x="61" y="34.5" font-family="Liberation Sans" font-size="14" fill="#dde6e4">REC</text></svg>
<div class="a" style="left:1119px;top:153px;width:40px;height:40px;border-radius:50%;background:radial-gradient(circle,rgba(255,255,255,0.5) 0 9px,rgba(255,255,255,0) 14px),conic-gradient(from 20deg,#9a9a9a,#e8e8e8 40deg,#c0c0c0 80deg,#a8a8a8 120deg,#e0e0e0 170deg,#f4f4f4 200deg,#b8b8b8 250deg,#f0f0f0 300deg,#9a9a9a 360deg);box-shadow:0 0 1px #555"></div>
<svg style="left:1129px;top:163px" width="20" height="20"><circle cx="10" cy="10" r="8" fill="#c6b2b6" stroke="#7a6a6e" stroke-width="1"/><path d="M10 3.5 V16.5 M3.5 10 H16.5" stroke="#b09ca0" stroke-width="0.6"/></svg>
<div class="a" style="left:847px;top:204px;width:72px;height:39px;background:#f4f4f4;border-right:1px solid #fafafa"></div>
<div class="t" style="left:855px;top:208px;font-size:31px;color:#000;font-weight:bold;">203</div>
<div class="a" style="left:968px;top:204px;width:121px;height:41px;background:#4a7eb6"></div>
<div class="t" style="left:1006px;top:208px;font-size:31px;color:#fff;font-weight:bold;">118</div>
<div class="a" style="left:1089px;top:205px;width:17px;height:40px;background:#f0f0f0;border:1px solid #c8c8c8"></div>
<div class="a" style="left:1091px;top:207px;width:13px;height:17px;background:linear-gradient(180deg,#f4f4f4,#dcdcdc);border:1px solid #d0d0d0"></div>
<div class="a" style="left:1091px;top:226px;width:13px;height:17px;background:linear-gradient(180deg,#f4f4f4,#dcdcdc);border:1px solid #d0d0d0"></div>
<svg style="left:1091px;top:207px" width="13" height="36"><path d="M3.5 10 L6.5 7 L9.5 10Z M3.5 26 L9.5 26 L6.5 29Z" fill="#445"/></svg>
<div class="a" style="left:1167px;top:213px;width:47px;height:47px;border:1px solid #8a8a8a;border-radius:4px;background:linear-gradient(180deg,#f2f2f2 0%,#f2f2f2 45%,#dcdcdc 46%,#e2e2e2 100%)"></div>
<div class="a" style="left:1179px;top:224px;width:22px;height:24px;background:#000"></div>
<div class="a" style="left:848px;top:253px;width:299px;height:15px;border:1px solid #b0b0b0;border-radius:3px;background:linear-gradient(180deg,#f0f0f0 0%,#e4e4e4 50%,#d0d0d0 85%,#e0e0e0 100%)"></div>
<div class="a" style="left:849px;top:254px;width:172px;height:13px;border-radius:2px;background:radial-gradient(ellipse 30px 10px at 94px 5px,rgba(220,255,220,0.85),rgba(220,255,220,0) 100%),linear-gradient(180deg,#b0f4b0 0%,#70e070 35%,#18b828 70%,#10a820 85%,#48d048 100%)"></div>
<div class="a" style="left:840px;top:276px;width:390px;height:201px;border-top:2px solid #6e6e6e;border-right:2px solid #6e6e6e;border-left:1px solid #fff;background:#f0f0f0"></div>
<div class="a" style="left:840px;top:476px;width:390px;height:202px;border-top:2px solid #6e6e6e;border-right:2px solid #6e6e6e;border-left:1px solid #fff;background:#f0f0f0"></div>
<div class="a" style="left:840px;top:677px;width:390px;height:2px;background:#6e6e6e"></div>
<div class="a" style="left:836px;top:276px;width:4px;height:405px;background:#fff"></div>
<div class="a" style="left:836px;top:680px;width:422px;height:2px;background:#fafafa;border-top:1px solid #c8c8c8"></div>
<div class="a" style="left:1054px;top:282px;width:1px;height:186px;background:#a8a8a8"></div>
<div class="a" style="left:1054px;top:484px;width:1px;height:186px;background:#a8a8a8"></div>
<svg style="left:836px;top:277px" width="220" height="220" viewBox="836 277 220 220"><defs>
<radialGradient id="rgA" cx="50%" cy="50%" r="50%"><stop offset="0.85" stop-color="#b4b4b4"/><stop offset="1" stop-color="#d8d8d8"/></radialGradient>
<linearGradient id="lgA" x1="0" y1="0" x2="0" y2="1"><stop offset="0" stop-color="#e2e2e2"/><stop offset="0.45" stop-color="#a8a8a8"/><stop offset="1" stop-color="#686868"/></linearGradient>
<linearGradient id="ogA" x1="0" y1="0" x2="0" y2="1"><stop offset="0" stop-color="#a2a2a2"/><stop offset="0.55" stop-color="#b0b0b0"/><stop offset="1" stop-color="#dcdcdc"/></linearGradient>
<linearGradient id="dgA" x1="0" y1="0" x2="0" y2="1"><stop offset="0" stop-color="#3a3a3a"/><stop offset="0.6" stop-color="#707070"/><stop offset="1" stop-color="#b8b8b8"/></linearGradient>
</defs><path d="M860.1 432.0 A99 99 0 1 1 1045.6 378.8" fill="none" stroke="#26aeea" stroke-width="3.6"/><filter id="kbA" x="-30%" y="-30%" width="160%" height="160%"><feGaussianBlur stdDeviation="3"/></filter><filter id="kcA" x="-30%" y="-30%" width="160%" height="160%"><feGaussianBlur stdDeviation="1.5"/></filter><circle cx="946" cy="390" r="83" fill="#d6d6d6" filter="url(#kcA)"/><circle cx="946" cy="387" r="81" fill="url(#ogA)"/><circle cx="946" cy="394" r="70" fill="#404040" opacity="0.35" filter="url(#kbA)"/><circle cx="946" cy="387" r="69" fill="url(#lgA)"/><path d="M999.0 387.0L1015.0 387.0M999.0 389.2L1014.9 389.9M998.8 391.4L1014.8 392.8M998.6 393.6L1014.5 395.6M998.3 395.8L1014.0 398.5M997.8 398.0L1013.5 401.3M997.3 400.2L1012.8 404.2M996.7 402.3L1012.1 406.9M996.1 404.4L1011.2 409.7M995.3 406.5L1010.2 412.4M994.4 408.6L1009.0 415.1M993.5 410.6L1007.8 417.7M992.4 412.5L1006.5 420.2M991.3 414.5L1005.0 422.7M990.1 416.3L1003.5 425.2M988.9 418.2L1001.8 427.6M987.5 419.9L1000.1 429.9M986.1 421.6L998.2 432.1M984.6 423.3L996.3 434.2M983.1 424.9L994.3 436.3M981.5 426.4L992.2 438.3M979.8 427.8L990.0 440.2M978.0 429.2L987.7 442.0M976.2 430.5L985.4 443.7M974.4 431.7L983.0 445.3M972.5 432.9L980.5 446.8M970.6 434.0L978.0 448.1M968.6 435.0L975.4 449.4M966.5 435.9L972.7 450.6M964.5 436.7L970.1 451.7M962.4 437.4L967.3 452.6M960.3 438.0L964.6 453.5M958.1 438.6L961.8 454.2M955.9 439.1L958.9 454.8M953.7 439.4L956.1 455.3M951.5 439.7L953.2 455.6M949.3 439.9L950.3 455.9M947.1 440.0L947.4 456.0M944.9 440.0L944.6 456.0M942.7 439.9L941.7 455.9M940.5 439.7L938.8 455.6M938.3 439.4L935.9 455.3M936.1 439.1L933.1 454.8M933.9 438.6L930.2 454.2M931.7 438.0L927.4 453.5M929.6 437.4L924.7 452.6M927.5 436.7L921.9 451.7M925.5 435.9L919.3 450.6M923.4 435.0L916.6 449.4M921.4 434.0L914.0 448.1M919.5 432.9L911.5 446.8M917.6 431.7L909.0 445.3M915.8 430.5L906.6 443.7M914.0 429.2L904.3 442.0M912.2 427.8L902.0 440.2M910.5 426.4L899.8 438.3M908.9 424.9L897.7 436.3M907.4 423.3L895.7 434.2M905.9 421.6L893.8 432.1M904.5 419.9L891.9 429.9M903.1 418.2L890.2 427.6M901.9 416.3L888.5 425.2M900.7 414.5L887.0 422.7M899.6 412.5L885.5 420.2M898.5 410.6L884.2 417.7M897.6 408.6L883.0 415.1M896.7 406.5L881.8 412.4M895.9 404.4L880.8 409.7M895.3 402.3L879.9 406.9M894.7 400.2L879.2 404.2M894.2 398.0L878.5 401.3M893.7 395.8L878.0 398.5M893.4 393.6L877.5 395.6M893.2 391.4L877.2 392.8M893.0 389.2L877.1 389.9M893.0 387.0L877.0 387.0M893.0 384.8L877.1 384.1M893.2 382.6L877.2 381.2M893.4 380.4L877.5 378.4M893.7 378.2L878.0 375.5M894.2 376.0L878.5 372.7M894.7 373.8L879.2 369.8M895.3 371.7L879.9 367.1M895.9 369.6L880.8 364.3M896.7 367.5L881.8 361.6M897.6 365.4L883.0 358.9M898.5 363.4L884.2 356.3M899.6 361.5L885.5 353.8M900.7 359.5L887.0 351.3M901.9 357.7L888.5 348.8M903.1 355.8L890.2 346.4M904.5 354.1L891.9 344.1M905.9 352.4L893.8 341.9M907.4 350.7L895.7 339.8M908.9 349.1L897.7 337.7M910.5 347.6L899.8 335.7M912.2 346.2L902.0 333.8M914.0 344.8L904.3 332.0M915.8 343.5L906.6 330.3M917.6 342.3L909.0 328.7M919.5 341.1L911.5 327.2M921.4 340.0L914.0 325.9M923.4 339.0L916.6 324.6M925.5 338.1L919.3 323.4M927.5 337.3L921.9 322.3M929.6 336.6L924.7 321.4M931.7 336.0L927.4 320.5M933.9 335.4L930.2 319.8M936.1 334.9L933.1 319.2M938.3 334.6L935.9 318.7M940.5 334.3L938.8 318.4M942.7 334.1L941.7 318.1M944.9 334.0L944.6 318.0M947.1 334.0L947.4 318.0M949.3 334.1L950.3 318.1M951.5 334.3L953.2 318.4M953.7 334.6L956.1 318.7M955.9 334.9L958.9 319.2M958.1 335.4L961.8 319.8M960.3 336.0L964.6 320.5M962.4 336.6L967.3 321.4M964.5 337.3L970.1 322.3M966.5 338.1L972.7 323.4M968.6 339.0L975.4 324.6M970.6 340.0L978.0 325.9M972.5 341.1L980.5 327.2M974.4 342.3L983.0 328.7M976.2 343.5L985.4 330.3M978.0 344.8L987.7 332.0M979.8 346.2L990.0 333.8M981.5 347.6L992.2 335.7M983.1 349.1L994.3 337.7M984.6 350.7L996.3 339.8M986.1 352.4L998.2 341.9M987.5 354.1L1000.1 344.1M988.9 355.8L1001.8 346.4M990.1 357.7L1003.5 348.8M991.3 359.5L1005.0 351.3M992.4 361.5L1006.5 353.8M993.5 363.4L1007.8 356.3M994.4 365.4L1009.0 358.9M995.3 367.5L1010.2 361.6M996.1 369.6L1011.2 364.3M996.7 371.7L1012.1 367.1M997.3 373.8L1012.8 369.8M997.8 376.0L1013.5 372.7M998.3 378.2L1014.0 375.5M998.6 380.4L1014.5 378.4M998.8 382.6L1014.8 381.2M999.0 384.8L1014.9 384.1" stroke="#ffffff" stroke-opacity="0.25" stroke-width="0.6"/><path d="M999.0 388.1L1015.0 388.4M998.9 390.3L1014.9 391.3M998.7 392.5L1014.6 394.2M998.4 394.7L1014.3 397.1M998.1 396.9L1013.8 399.9M997.6 399.1L1013.2 402.8M997.0 401.3L1012.5 405.6M996.4 403.4L1011.6 408.3M995.7 405.5L1010.7 411.1M994.9 407.5L1009.6 413.7M994.0 409.6L1008.4 416.4M993.0 411.6L1007.1 419.0M991.9 413.5L1005.8 421.5M990.7 415.4L1004.3 424.0M989.5 417.2L1002.7 426.4M988.2 419.0L1001.0 428.7M986.8 420.8L999.2 431.0M985.4 422.5L997.3 433.2M983.9 424.1L995.3 435.3M982.3 425.6L993.2 437.3M980.6 427.1L991.1 439.2M978.9 428.5L988.9 441.1M977.2 429.9L986.6 442.8M975.3 431.1L984.2 444.5M973.5 432.3L981.7 446.0M971.5 433.4L979.2 447.5M969.6 434.5L976.7 448.8M967.6 435.4L974.1 450.0M965.5 436.3L971.4 451.2M963.4 437.1L968.7 452.2M961.3 437.7L965.9 453.1M959.2 438.3L963.2 453.8M957.0 438.8L960.3 454.5M954.8 439.3L957.5 455.0M952.6 439.6L954.6 455.5M950.4 439.8L951.8 455.8M948.2 440.0L948.9 455.9M946.0 440.0L946.0 456.0M943.8 440.0L943.1 455.9M941.6 439.8L940.2 455.8M939.4 439.6L937.4 455.5M937.2 439.3L934.5 455.0M935.0 438.8L931.7 454.5M932.8 438.3L928.8 453.8M930.7 437.7L926.1 453.1M928.6 437.1L923.3 452.2M926.5 436.3L920.6 451.2M924.4 435.4L917.9 450.0M922.4 434.5L915.3 448.8M920.5 433.4L912.8 447.5M918.5 432.3L910.3 446.0M916.7 431.1L907.8 444.5M914.8 429.9L905.4 442.8M913.1 428.5L903.1 441.1M911.4 427.1L900.9 439.2M909.7 425.6L898.8 437.3M908.1 424.1L896.7 435.3M906.6 422.5L894.7 433.2M905.2 420.8L892.8 431.0M903.8 419.0L891.0 428.7M902.5 417.2L889.3 426.4M901.3 415.4L887.7 424.0M900.1 413.5L886.2 421.5M899.0 411.6L884.9 419.0M898.0 409.6L883.6 416.4M897.1 407.5L882.4 413.7M896.3 405.5L881.3 411.1M895.6 403.4L880.4 408.3M895.0 401.3L879.5 405.6M894.4 399.1L878.8 402.8M893.9 396.9L878.2 399.9M893.6 394.7L877.7 397.1M893.3 392.5L877.4 394.2M893.1 390.3L877.1 391.3M893.0 388.1L877.0 388.4M893.0 385.9L877.0 385.6M893.1 383.7L877.1 382.7M893.3 381.5L877.4 379.8M893.6 379.3L877.7 376.9M893.9 377.1L878.2 374.1M894.4 374.9L878.8 371.2M895.0 372.7L879.5 368.4M895.6 370.6L880.4 365.7M896.3 368.5L881.3 362.9M897.1 366.5L882.4 360.3M898.0 364.4L883.6 357.6M899.0 362.4L884.9 355.0M900.1 360.5L886.2 352.5M901.3 358.6L887.7 350.0M902.5 356.8L889.3 347.6M903.8 355.0L891.0 345.3M905.2 353.2L892.8 343.0M906.6 351.5L894.7 340.8M908.1 349.9L896.7 338.7M909.7 348.4L898.8 336.7M911.4 346.9L900.9 334.8M913.1 345.5L903.1 332.9M914.8 344.1L905.4 331.2M916.7 342.9L907.8 329.5M918.5 341.7L910.3 328.0M920.5 340.6L912.8 326.5M922.4 339.5L915.3 325.2M924.4 338.6L917.9 324.0M926.5 337.7L920.6 322.8M928.6 336.9L923.3 321.8M930.7 336.3L926.1 320.9M932.8 335.7L928.8 320.2M935.0 335.2L931.7 319.5M937.2 334.7L934.5 319.0M939.4 334.4L937.4 318.5M941.6 334.2L940.2 318.2M943.8 334.0L943.1 318.1M946.0 334.0L946.0 318.0M948.2 334.0L948.9 318.1M950.4 334.2L951.8 318.2M952.6 334.4L954.6 318.5M954.8 334.7L957.5 319.0M957.0 335.2L960.3 319.5M959.2 335.7L963.2 320.2M961.3 336.3L965.9 320.9M963.4 336.9L968.7 321.8M965.5 337.7L971.4 322.8M967.6 338.6L974.1 324.0M969.6 339.5L976.7 325.2M971.5 340.6L979.2 326.5M973.5 341.7L981.7 328.0M975.3 342.9L984.2 329.5M977.2 344.1L986.6 331.2M978.9 345.5L988.9 332.9M980.6 346.9L991.1 334.8M982.3 348.4L993.2 336.7M983.9 349.9L995.3 338.7M985.4 351.5L997.3 340.8M986.8 353.2L999.2 343.0M988.2 355.0L1001.0 345.3M989.5 356.8L1002.7 347.6M990.7 358.6L1004.3 350.0M991.9 360.5L1005.8 352.5M993.0 362.4L1007.1 355.0M994.0 364.4L1008.4 357.6M994.9 366.5L1009.6 360.3M995.7 368.5L1010.7 362.9M996.4 370.6L1011.6 365.7M997.0 372.7L1012.5 368.4M997.6 374.9L1013.2 371.2M998.1 377.1L1013.8 374.1M998.4 379.3L1014.3 376.9M998.7 381.5L1014.6 379.8M998.9 383.7L1014.9 382.7M999.0 385.9L1015.0 385.6" stroke="#000000" stroke-opacity="0.12" stroke-width="0.6"/><circle cx="945" cy="390" r="53" fill="#101010" opacity="0.75" filter="url(#kcA)"/><circle cx="946" cy="387" r="52" fill="#ffffff"/><circle cx="956.5" cy="355" r="10" fill="url(#dgA)"/><circle cx="879.2" cy="421.0" r="1.6" fill="#555"/><circle cx="871.7" cy="377.1" r="1.6" fill="#555"/><circle cx="887.7" cy="339.8" r="1.6" fill="#555"/><circle cx="921.6" cy="316.1" r="1.6" fill="#555"/><circle cx="970.4" cy="316.1" r="1.6" fill="#555"/><circle cx="1003.9" cy="339.3" r="1.6" fill="#555"/><circle cx="1020.8" cy="381.8" r="1.6" fill="#555"/><text x="867.7" y="426.0" transform="rotate(242.0 867.7 426.0)" font-family="Liberation Sans" font-size="13" fill="#7e7e7e" text-anchor="middle" dominant-baseline="central">0.2V</text><text x="857.5" y="376.2" transform="rotate(275.0 857.5 376.2)" font-family="Liberation Sans" font-size="13" fill="#7e7e7e" text-anchor="middle" dominant-baseline="central">0.5V</text><text x="876.2" y="328.9" transform="rotate(308.0 876.2 328.9)" font-family="Liberation Sans" font-size="13" fill="#7e7e7e" text-anchor="middle" dominant-baseline="central">1V</text><text x="913.2" y="301.0" transform="rotate(338.0 913.2 301.0)" font-family="Liberation Sans" font-size="13" fill="#7e7e7e" text-anchor="middle" dominant-baseline="central">2V</text><text x="969.9" y="297.5" transform="rotate(375.0 969.9 297.5)" font-family="Liberation Sans" font-size="13" fill="#7e7e7e" text-anchor="middle" dominant-baseline="central">5V</text><text x="1015.3" y="326.5" transform="rotate(410.0 1015.3 326.5)" font-family="Liberation Sans" font-size="13" fill="#7e7e7e" text-anchor="middle" dominant-baseline="central">10V</text><text x="1036.2" y="384.8" transform="rotate(90.5 1036.2 384.8)" font-family="Liberation Sans" font-size="13" fill="#7e7e7e" text-anchor="middle" dominant-baseline="central">20V</text><g transform="translate(1028.5 302.7) rotate(43.5)"><rect x="-18" y="-8.6" width="36" height="17.2" rx="2" fill="#2aa6e6"/><path d="M-9 8 L-3 8 L-7 13Z" fill="#2aa6e6"/><text x="0" y="1" font-family="Liberation Sans" font-weight="bold" font-size="13" fill="#fff" text-anchor="middle" dominant-baseline="central">ch: A</text></g></svg>
<svg style="left:836px;top:477px" width="220" height="220" viewBox="836 477 220 220"><defs>
<radialGradient id="rgB" cx="50%" cy="50%" r="50%"><stop offset="0.85" stop-color="#b4b4b4"/><stop offset="1" stop-color="#d8d8d8"/></radialGradient>
<linearGradient id="lgB" x1="0" y1="0" x2="0" y2="1"><stop offset="0" stop-color="#e2e2e2"/><stop offset="0.45" stop-color="#a8a8a8"/><stop offset="1" stop-color="#686868"/></linearGradient>
<linearGradient id="ogB" x1="0" y1="0" x2="0" y2="1"><stop offset="0" stop-color="#a2a2a2"/><stop offset="0.55" stop-color="#b0b0b0"/><stop offset="1" stop-color="#dcdcdc"/></linearGradient>
<linearGradient id="dgB" x1="0" y1="0" x2="0" y2="1"><stop offset="0" stop-color="#3a3a3a"/><stop offset="0.6" stop-color="#707070"/><stop offset="1" stop-color="#b8b8b8"/></linearGradient>
</defs><path d="M860.1 632.0 A99 99 0 1 1 1045.6 578.8" fill="none" stroke="#f0ec10" stroke-width="3.6"/><filter id="kbB" x="-30%" y="-30%" width="160%" height="160%"><feGaussianBlur stdDeviation="3"/></filter><filter id="kcB" x="-30%" y="-30%" width="160%" height="160%"><feGaussianBlur stdDeviation="1.5"/></filter><circle cx="946" cy="590" r="83" fill="#d6d6d6" filter="url(#kcB)"/><circle cx="946" cy="587" r="81" fill="url(#ogB)"/><circle cx="946" cy="594" r="70" fill="#404040" opacity="0.35" filter="url(#kbB)"/><circle cx="946" cy="587" r="69" fill="url(#lgB)"/><path d="M999.0 587.0L1015.0 587.0M999.0 589.2L1014.9 589.9M998.8 591.4L1014.8 592.8M998.6 593.6L1014.5 595.6M998.3 595.8L1014.0 598.5M997.8 598.0L1013.5 601.3M997.3 600.2L1012.8 604.2M996.7 602.3L1012.1 606.9M996.1 604.4L1011.2 609.7M995.3 606.5L1010.2 612.4M994.4 608.6L1009.0 615.1M993.5 610.6L1007.8 617.7M992.4 612.5L1006.5 620.2M991.3 614.5L1005.0 622.7M990.1 616.3L1003.5 625.2M988.9 618.2L1001.8 627.6M987.5 619.9L1000.1 629.9M986.1 621.6L998.2 632.1M984.6 623.3L996.3 634.2M983.1 624.9L994.3 636.3M981.5 626.4L992.2 638.3M979.8 627.8L990.0 640.2M978.0 629.2L987.7 642.0M976.2 630.5L985.4 643.7M974.4 631.7L983.0 645.3M972.5 632.9L980.5 646.8M970.6 634.0L978.0 648.1M968.6 635.0L975.4 649.4M966.5 635.9L972.7 650.6M964.5 636.7L970.1 651.7M962.4 637.4L967.3 652.6M960.3 638.0L964.6 653.5M958.1 638.6L961.8 654.2M955.9 639.1L958.9 654.8M953.7 639.4L956.1 655.3M951.5 639.7L953.2 655.6M949.3 639.9L950.3 655.9M947.1 640.0L947.4 656.0M944.9 640.0L944.6 656.0M942.7 639.9L941.7 655.9M940.5 639.7L938.8 655.6M938.3 639.4L935.9 655.3M936.1 639.1L933.1 654.8M933.9 638.6L930.2 654.2M931.7 638.0L927.4 653.5M929.6 637.4L924.7 652.6M927.5 636.7L921.9 651.7M925.5 635.9L919.3 650.6M923.4 635.0L916.6 649.4M921.4 634.0L914.0 648.1M919.5 632.9L911.5 646.8M917.6 631.7L909.0 645.3M915.8 630.5L906.6 643.7M914.0 629.2L904.3 642.0M912.2 627.8L902.0 640.2M910.5 626.4L899.8 638.3M908.9 624.9L897.7 636.3M907.4 623.3L895.7 634.2M905.9 621.6L893.8 632.1M904.5 619.9L891.9 629.9M903.1 618.2L890.2 627.6M901.9 616.3L888.5 625.2M900.7 614.5L887.0 622.7M899.6 612.5L885.5 620.2M898.5 610.6L884.2 617.7M897.6 608.6L883.0 615.1M896.7 606.5L881.8 612.4M895.9 604.4L880.8 609.7M895.3 602.3L879.9 606.9M894.7 600.2L879.2 604.2M894.2 598.0L878.5 601.3M893.7 595.8L878.0 598.5M893.4 593.6L877.5 595.6M893.2 591.4L877.2 592.8M893.0 589.2L877.1 589.9M893.0 587.0L877.0 587.0M893.0 584.8L877.1 584.1M893.2 582.6L877.2 581.2M893.4 580.4L877.5 578.4M893.7 578.2L878.0 575.5M894.2 576.0L878.5 572.7M894.7 573.8L879.2 569.8M895.3 571.7L879.9 567.1M895.9 569.6L880.8 564.3M896.7 567.5L881.8 561.6M897.6 565.4L883.0 558.9M898.5 563.4L884.2 556.3M899.6 561.5L885.5 553.8M900.7 559.5L887.0 551.3M901.9 557.7L888.5 548.8M903.1 555.8L890.2 546.4M904.5 554.1L891.9 544.1M905.9 552.4L893.8 541.9M907.4 550.7L895.7 539.8M908.9 549.1L897.7 537.7M910.5 547.6L899.8 535.7M912.2 546.2L902.0 533.8M914.0 544.8L904.3 532.0M915.8 543.5L906.6 530.3M917.6 542.3L909.0 528.7M919.5 541.1L911.5 527.2M921.4 540.0L914.0 525.9M923.4 539.0L916.6 524.6M925.5 538.1L919.3 523.4M927.5 537.3L921.9 522.3M929.6 536.6L924.7 521.4M931.7 536.0L927.4 520.5M933.9 535.4L930.2 519.8M936.1 534.9L933.1 519.2M938.3 534.6L935.9 518.7M940.5 534.3L938.8 518.4M942.7 534.1L941.7 518.1M944.9 534.0L944.6 518.0M947.1 534.0L947.4 518.0M949.3 534.1L950.3 518.1M951.5 534.3L953.2 518.4M953.7 534.6L956.1 518.7M955.9 534.9L958.9 519.2M958.1 535.4L961.8 519.8M960.3 536.0L964.6 520.5M962.4 536.6L967.3 521.4M964.5 537.3L970.1 522.3M966.5 538.1L972.7 523.4M968.6 539.0L975.4 524.6M970.6 540.0L978.0 525.9M972.5 541.1L980.5 527.2M974.4 542.3L983.0 528.7M976.2 543.5L985.4 530.3M978.0 544.8L987.7 532.0M979.8 546.2L990.0 533.8M981.5 547.6L992.2 535.7M983.1 549.1L994.3 537.7M984.6 550.7L996.3 539.8M986.1 552.4L998.2 541.9M987.5 554.1L1000.1 544.1M988.9 555.8L1001.8 546.4M990.1 557.7L1003.5 548.8M991.3 559.5L1005.0 551.3M992.4 561.5L1006.5 553.8M993.5 563.4L1007.8 556.3M994.4 565.4L1009.0 558.9M995.3 567.5L1010.2 561.6M996.1 569.6L1011.2 564.3M996.7 571.7L1012.1 567.1M997.3 573.8L1012.8 569.8M997.8 576.0L1013.5 572.7M998.3 578.2L1014.0 575.5M998.6 580.4L1014.5 578.4M998.8 582.6L1014.8 581.2M999.0 584.8L1014.9 584.1" stroke="#ffffff" stroke-opacity="0.25" stroke-width="0.6"/><path d="M999.0 588.1L1015.0 588.4M998.9 590.3L1014.9 591.3M998.7 592.5L1014.6 594.2M998.4 594.7L1014.3 597.1M998.1 596.9L1013.8 599.9M997.6 599.1L1013.2 602.8M997.0 601.3L1012.5 605.6M996.4 603.4L1011.6 608.3M995.7 605.5L1010.7 611.1M994.9 607.5L1009.6 613.7M994.0 609.6L1008.4 616.4M993.0 611.6L1007.1 619.0M991.9 613.5L1005.8 621.5M990.7 615.4L1004.3 624.0M989.5 617.2L1002.7 626.4M988.2 619.0L1001.0 628.7M986.8 620.8L999.2 631.0M985.4 622.5L997.3 633.2M983.9 624.1L995.3 635.3M982.3 625.6L993.2 637.3M980.6 627.1L991.1 639.2M978.9 628.5L988.9 641.1M977.2 629.9L986.6 642.8M975.3 631.1L984.2 644.5M973.5 632.3L981.7 646.0M971.5 633.4L979.2 647.5M969.6 634.5L976.7 648.8M967.6 635.4L974.1 650.0M965.5 636.3L971.4 651.2M963.4 637.1L968.7 652.2M961.3 637.7L965.9 653.1M959.2 638.3L963.2 653.8M957.0 638.8L960.3 654.5M954.8 639.3L957.5 655.0M952.6 639.6L954.6 655.5M950.4 639.8L951.8 655.8M948.2 640.0L948.9 655.9M946.0 640.0L946.0 656.0M943.8 640.0L943.1 655.9M941.6 639.8L940.2 655.8M939.4 639.6L937.4 655.5M937.2 639.3L934.5 655.0M935.0 638.8L931.7 654.5M932.8 638.3L928.8 653.8M930.7 637.7L926.1 653.1M928.6 637.1L923.3 652.2M926.5 636.3L920.6 651.2M924.4 635.4L917.9 650.0M922.4 634.5L915.3 648.8M920.5 633.4L912.8 647.5M918.5 632.3L910.3 646.0M916.7 631.1L907.8 644.5M914.8 629.9L905.4 642.8M913.1 628.5L903.1 641.1M911.4 627.1L900.9 639.2M909.7 625.6L898.8 637.3M908.1 624.1L896.7 635.3M906.6 622.5L894.7 633.2M905.2 620.8L892.8 631.0M903.8 619.0L891.0 628.7M902.5 617.2L889.3 626.4M901.3 615.4L887.7 624.0M900.1 613.5L886.2 621.5M899.0 611.6L884.9 619.0M898.0 609.6L883.6 616.4M897.1 607.5L882.4 613.7M896.3 605.5L881.3 611.1M895.6 603.4L880.4 608.3M895.0 601.3L879.5 605.6M894.4 599.1L878.8 602.8M893.9 596.9L878.2 599.9M893.6 594.7L877.7 597.1M893.3 592.5L877.4 594.2M893.1 590.3L877.1 591.3M893.0 588.1L877.0 588.4M893.0 585.9L877.0 585.6M893.1 583.7L877.1 582.7M893.3 581.5L877.4 579.8M893.6 579.3L877.7 576.9M893.9 577.1L878.2 574.1M894.4 574.9L878.8 571.2M895.0 572.7L879.5 568.4M895.6 570.6L880.4 565.7M896.3 568.5L881.3 562.9M897.1 566.5L882.4 560.3M898.0 564.4L883.6 557.6M899.0 562.4L884.9 555.0M900.1 560.5L886.2 552.5M901.3 558.6L887.7 550.0M902.5 556.8L889.3 547.6M903.8 555.0L891.0 545.3M905.2 553.2L892.8 543.0M906.6 551.5L894.7 540.8M908.1 549.9L896.7 538.7M909.7 548.4L898.8 536.7M911.4 546.9L900.9 534.8M913.1 545.5L903.1 532.9M914.8 544.1L905.4 531.2M916.7 542.9L907.8 529.5M918.5 541.7L910.3 528.0M920.5 540.6L912.8 526.5M922.4 539.5L915.3 525.2M924.4 538.6L917.9 524.0M926.5 537.7L920.6 522.8M928.6 536.9L923.3 521.8M930.7 536.3L926.1 520.9M932.8 535.7L928.8 520.2M935.0 535.2L931.7 519.5M937.2 534.7L934.5 519.0M939.4 534.4L937.4 518.5M941.6 534.2L940.2 518.2M943.8 534.0L943.1 518.1M946.0 534.0L946.0 518.0M948.2 534.0L948.9 518.1M950.4 534.2L951.8 518.2M952.6 534.4L954.6 518.5M954.8 534.7L957.5 519.0M957.0 535.2L960.3 519.5M959.2 535.7L963.2 520.2M961.3 536.3L965.9 520.9M963.4 536.9L968.7 521.8M965.5 537.7L971.4 522.8M967.6 538.6L974.1 524.0M969.6 539.5L976.7 525.2M971.5 540.6L979.2 526.5M973.5 541.7L981.7 528.0M975.3 542.9L984.2 529.5M977.2 544.1L986.6 531.2M978.9 545.5L988.9 532.9M980.6 546.9L991.1 534.8M982.3 548.4L993.2 536.7M983.9 549.9L995.3 538.7M985.4 551.5L997.3 540.8M986.8 553.2L999.2 543.0M988.2 555.0L1001.0 545.3M989.5 556.8L1002.7 547.6M990.7 558.6L1004.3 550.0M991.9 560.5L1005.8 552.5M993.0 562.4L1007.1 555.0M994.0 564.4L1008.4 557.6M994.9 566.5L1009.6 560.3M995.7 568.5L1010.7 562.9M996.4 570.6L1011.6 565.7M997.0 572.7L1012.5 568.4M997.6 574.9L1013.2 571.2M998.1 577.1L1013.8 574.1M998.4 579.3L1014.3 576.9M998.7 581.5L1014.6 579.8M998.9 583.7L1014.9 582.7M999.0 585.9L1015.0 585.6" stroke="#000000" stroke-opacity="0.12" stroke-width="0.6"/><circle cx="945" cy="590" r="53" fill="#101010" opacity="0.75" filter="url(#kcB)"/><circle cx="946" cy="587" r="52" fill="#ffffff"/><circle cx="956.5" cy="555" r="10" fill="url(#dgB)"/><circle cx="879.2" cy="621.0" r="1.6" fill="#555"/><circle cx="871.7" cy="577.1" r="1.6" fill="#555"/><circle cx="887.7" cy="539.8" r="1.6" fill="#555"/><circle cx="921.6" cy="516.1" r="1.6" fill="#555"/><circle cx="970.4" cy="516.1" r="1.6" fill="#555"/><circle cx="1003.9" cy="539.3" r="1.6" fill="#555"/><circle cx="1020.8" cy="581.8" r="1.6" fill="#555"/><text x="867.7" y="626.0" transform="rotate(242.0 867.7 626.0)" font-family="Liberation Sans" font-size="13" fill="#7e7e7e" text-anchor="middle" dominant-baseline="central">0.2V</text><text x="857.5" y="576.2" transform="rotate(275.0 857.5 576.2)" font-family="Liberation Sans" font-size="13" fill="#7e7e7e" text-anchor="middle" dominant-baseline="central">0.5V</text><text x="876.2" y="528.9" transform="rotate(308.0 876.2 528.9)" font-family="Liberation Sans" font-size="13" fill="#7e7e7e" text-anchor="middle" dominant-baseline="central">1V</text><text x="913.2" y="501.0" transform="rotate(338.0 913.2 501.0)" font-family="Liberation Sans" font-size="13" fill="#7e7e7e" text-anchor="middle" dominant-baseline="central">2V</text><text x="969.9" y="497.5" transform="rotate(375.0 969.9 497.5)" font-family="Liberation Sans" font-size="13" fill="#7e7e7e" text-anchor="middle" dominant-baseline="central">5V</text><text x="1015.3" y="526.5" transform="rotate(410.0 1015.3 526.5)" font-family="Liberation Sans" font-size="13" fill="#7e7e7e" text-anchor="middle" dominant-baseline="central">10V</text><text x="1036.2" y="584.8" transform="rotate(90.5 1036.2 584.8)" font-family="Liberation Sans" font-size="13" fill="#7e7e7e" text-anchor="middle" dominant-baseline="central">20V</text><g transform="translate(1028.5 502.7) rotate(43.5)"><rect x="-18" y="-8.6" width="36" height="17.2" rx="2" fill="#f2ea18"/><path d="M-9 8 L-3 8 L-7 13Z" fill="#f2ea18"/><text x="0" y="1" font-family="Liberation Sans" font-weight="bold" font-size="13" fill="#555" text-anchor="middle" dominant-baseline="central">ch : B</text></g></svg>
<div class="a" style="left:1065px;top:288px;width:75px;height:25px;border-radius:13px;background:linear-gradient(180deg,#5fd4ea,#38b8d8);box-shadow:0 2px 4px rgba(0,0,0,0.25) inset,0 3px 5px rgba(0,0,0,0.12)"></div>
<div class="a" style="left:1064px;top:285px;width:31px;height:31px;border-radius:50%;background:radial-gradient(circle at 45% 35%,#fafafa,#dcdde2);box-shadow:0 3px 4px rgba(0,0,0,0.35)"></div>
<div class="t" style="left:1101px;top:293px;font-size:15px;color:#3c4a56;font-weight:bold;">chA</div>
<div class="a" style="left:1153px;top:291px;width:74px;height:21px;border:1px solid #8e8e8e;border-radius:3px;background:linear-gradient(180deg,#f4f4f4 0%,#e4e4e4 50%,#d4d4d4 100%)"></div>
<svg style="left:1157px;top:297px" width="10" height="8"><path d="M1 2 H8 L4.5 6Z" fill="#111"/></svg>
<div class="t" style="left:1160px;width:64px;text-align:right;top:295px;font-size:13px;font-weight:bold;color:#111">10X</div>
<div class="t" style="left:1064px;top:340px;font-size:14px;color:#9a9a9a;font-weight:normal;">DC</div>
<div class="t" style="left:1150px;top:340px;font-size:14px;color:#9a9a9a;font-weight:normal;">AC</div>
<div class="a" style="left:1089px;top:336px;width:55px;height:20px;border-radius:10px;background:#f4f4f4;box-shadow:0 0 4px rgba(0,0,0,0.12)"></div>
<div class="a" style="left:1091px;top:338px;width:50px;height:16px;border-radius:8px;background:#d6d6d6"></div>
<div class="a" style="left:1091px;top:337px;width:31px;height:18px;border-radius:9px;background:linear-gradient(180deg,#f8dcb0,#e8c088);box-shadow:0 1px 2px rgba(0,0,0,0.3)"></div>
<div class="a" style="left:1108px;top:341px;width:10px;height:10px;border-radius:50%;background:#e0b880;box-shadow:0 0 1px #b89060 inset"></div>
<div class="a" style="left:1062px;top:386px;width:14px;height:13px;background:linear-gradient(135deg,#e8e8e8,#fff);border:1px solid #9a9a9a"></div>
<svg style="left:1080px;top:379px" width="37" height="27"><path d="M0 3 Q4.5 0 9 3 T18 3 T27 3 T36 3 V26 Q31.5 23 27 26 T18 26 T9 26 T0 26Z" fill="#3ab0d8"/><path d="M0 10 Q4.5 7 9 10 T18 10 T27 10 T36 10 V17 Q31.5 14 27 17 T18 17 T9 17 T0 17Z" fill="#2a88b0"/></svg>
<div class="a" style="left:1151px;top:384px;width:13px;height:13px;background:linear-gradient(135deg,#dde4ee,#fff);border:1px solid #8a94a6"></div>
<svg style="left:1152px;top:385px" width="12" height="12"><path d="M2 6 L5 9.5 L10 1" stroke="#2a4a9a" stroke-width="1.8" fill="none"/></svg>
<div class="t" style="left:1171px;top:383px;font-size:13px;color:#111;font-weight:normal;">baseline</div>
<div class="a" style="left:1151px;top:407px;width:75px;height:19px;border-top:1px solid #a8a8a8;border-left:1px solid #a8a8a8;background:#f4f4f4"></div>
<div class="t" style="left:1151px;width:75px;text-align:center;top:411px;font-size:13px;color:#111">5,000V</div>
<div class="a" style="left:1062px;top:429px;width:128px;height:36px;background:#f2f2f2;border:1px solid #c4c4c4;border-left:4px solid #c0c0c0"></div>
<div class="a" style="left:1075px;top:437px;width:106px;height:1px;background:#a8a8a8"></div>
<svg style="left:1077px;top:449px" width="104" height="6"><path d="M1.5 0 V5M3.5 0 V5M5.5 0 V5M7.5 0 V5M9.5 0 V5M11.5 0 V5M13.5 0 V5M15.5 0 V5M17.5 0 V5M19.5 0 V5M21.5 0 V5M23.5 0 V5M25.5 0 V5M27.5 0 V5M29.5 0 V5M31.5 0 V5M33.5 0 V5M35.5 0 V5M37.5 0 V5M39.5 0 V5M41.5 0 V5M43.5 0 V5M45.5 0 V5M47.5 0 V5M49.5 0 V5M51.5 0 V5M53.5 0 V5M55.5 0 V5M57.5 0 V5M59.5 0 V5M61.5 0 V5M63.5 0 V5M65.5 0 V5M67.5 0 V5M69.5 0 V5M71.5 0 V5M73.5 0 V5M75.5 0 V5M77.5 0 V5M79.5 0 V5M81.5 0 V5M83.5 0 V5M85.5 0 V5M87.5 0 V5M89.5 0 V5M91.5 0 V5M93.5 0 V5M95.5 0 V5M97.5 0 V5M99.5 0 V5M101.5 0 V5M103.5 0 V5" stroke="#b8b8b8" stroke-width="0.8"/></svg>
<svg style="left:1096px;top:430px" width="13" height="20"><path d="M1.5 1.5 H11.5 V13 L6.5 18.5 L1.5 13Z" fill="url(#thg)" stroke="#808080"/><defs><linearGradient id="thg" x1="0" y1="0" x2="0" y2="1"><stop offset="0" stop-color="#fafafa"/><stop offset="1" stop-color="#d0d0d0"/></linearGradient></defs></svg>
<div class="a" style="left:1190px;top:430px;width:34px;height:34px;background:#333"></div>
<svg style="left:1190px;top:430px" width="34" height="34"><circle cx="17" cy="17" r="16.5" fill="#1a9ab0"/><path d="M11.06 21.71 A7 7 0 1 0 10.66 15.04" fill="none" stroke="#fff" stroke-width="5"/><path d="M7 10.7 L8 18.5 L14 15.5Z" fill="#fff"/></svg>
<div class="a" style="left:1068px;top:489px;width:72px;height:24px;border-radius:12px;background:linear-gradient(180deg,#9a988c,#828074);box-shadow:0 2px 4px rgba(0,0,0,0.3) inset,0 3px 5px rgba(0,0,0,0.12)"></div>
<div class="t" style="left:1080px;top:493px;font-size:15px;color:#4a4a44;font-weight:bold;">chB</div>
<div class="a" style="left:1111px;top:486px;width:31px;height:31px;border-radius:50%;background:radial-gradient(circle at 45% 35%,#fafafa,#dcdde2);box-shadow:0 3px 4px rgba(0,0,0,0.35)"></div>
<div class="a" style="left:1153px;top:491px;width:74px;height:21px;border:1px solid #8e8e8e;border-radius:3px;background:linear-gradient(180deg,#f4f4f4 0%,#e4e4e4 50%,#d4d4d4 100%)"></div>
<svg style="left:1157px;top:497px" width="10" height="8"><path d="M1 2 H8 L4.5 6Z" fill="#111"/></svg>
<div class="t" style="left:1160px;width:64px;text-align:right;top:495px;font-size:13px;font-weight:bold;color:#111">10X</div>
<div class="t" style="left:1064px;top:540px;font-size:14px;color:#9a9a9a;font-weight:normal;">DC</div>
<div class="t" style="left:1150px;top:540px;font-size:14px;color:#9a9a9a;font-weight:normal;">AC</div>
<div class="a" style="left:1089px;top:536px;width:55px;height:20px;border-radius:10px;background:#f4f4f4;box-shadow:0 0 4px rgba(0,0,0,0.12)"></div>
<div class="a" style="left:1091px;top:538px;width:50px;height:16px;border-radius:8px;background:#d6d6d6"></div>
<div class="a" style="left:1111px;top:537px;width:31px;height:18px;border-radius:9px;background:linear-gradient(180deg,#f8dcb0,#e8c088);box-shadow:0 1px 2px rgba(0,0,0,0.3)"></div>
<div class="a" style="left:1117px;top:541px;width:10px;height:10px;border-radius:50%;background:#e0b880;box-shadow:0 0 1px #b89060 inset"></div>
<div class="a" style="left:1151px;top:572px;width:75px;height:19px;border-top:1px solid #a8a8a8;border-left:1px solid #a8a8a8;background:#f4f4f4"></div>
<div class="t" style="left:1151px;width:75px;text-align:center;top:576px;font-size:13px;color:#111">5,000V</div>
<div class="a" style="left:1062px;top:593px;width:128px;height:36px;background:#f2f2f2;border:1px solid #c4c4c4;border-left:4px solid #c0c0c0"></div>
<div class="a" style="left:1075px;top:601px;width:106px;height:1px;background:#a8a8a8"></div>
<svg style="left:1077px;top:613px" width="104" height="6"><path d="M1.5 0 V5M3.5 0 V5M5.5 0 V5M7.5 0 V5M9.5 0 V5M11.5 0 V5M13.5 0 V5M15.5 0 V5M17.5 0 V5M19.5 0 V5M21.5 0 V5M23.5 0 V5M25.5 0 V5M27.5 0 V5M29.5 0 V5M31.5 0 V5M33.5 0 V5M35.5 0 V5M37.5 0 V5M39.5 0 V5M41.5 0 V5M43.5 0 V5M45.5 0 V5M47.5 0 V5M49.5 0 V5M51.5 0 V5M53.5 0 V5M55.5 0 V5M57.5 0 V5M59.5 0 V5M61.5 0 V5M63.5 0 V5M65.5 0 V5M67.5 0 V5M69.5 0 V5M71.5 0 V5M73.5 0 V5M75.5 0 V5M77.5 0 V5M79.5 0 V5M81.5 0 V5M83.5 0 V5M85.5 0 V5M87.5 0 V5M89.5 0 V5M91.5 0 V5M93.5 0 V5M95.5 0 V5M97.5 0 V5M99.5 0 V5M101.5 0 V5M103.5 0 V5" stroke="#b8b8b8" stroke-width="0.8"/></svg>
<svg style="left:1096px;top:594px" width="13" height="20"><path d="M1.5 1.5 H11.5 V13 L6.5 18.5 L1.5 13Z" fill="url(#thg)" stroke="#808080"/><defs><linearGradient id="thg" x1="0" y1="0" x2="0" y2="1"><stop offset="0" stop-color="#fafafa"/><stop offset="1" stop-color="#d0d0d0"/></linearGradient></defs></svg>
<div class="a" style="left:1190px;top:594px;width:34px;height:34px;background:#333"></div>
<svg style="left:1190px;top:594px" width="34" height="34"><circle cx="17" cy="17" r="16.5" fill="#c8bc10"/><path d="M11.06 21.71 A7 7 0 1 0 10.66 15.04" fill="none" stroke="#fff" stroke-width="5"/><path d="M7 10.7 L8 18.5 L14 15.5Z" fill="#fff"/></svg>
<div class="a" style="left:1061px;top:646px;width:14px;height:13px;background:linear-gradient(135deg,#e8e8e8,#fff);border:1px solid #9a9a9a"></div>
<svg style="left:1080px;top:638px" width="144" height="28"><path d="M4.5 24 H15.2 V2 H30.9 V24 H47.2 V2 H63 V24 H79.9 V2 H83.2 V24 H86 V2 H89.4 V24 H92.2 V2 H95.6 V24 H112.5 V2 H128.2 V24 H139" fill="none" stroke="#111" stroke-width="2.1" stroke-linejoin="round"/></svg>
<div class="a" style="left:1229px;top:77px;width:2px;height:111px;background:#7c7c7c"></div>
<div class="a" style="left:1229px;top:246px;width:2px;height:434px;background:#7c7c7c"></div>
<div class="a" style="left:1257px;top:75px;width:1px;height:820px;background:#c8c8c8"></div>
<div class="a" style="left:1231px;top:77px;width:24px;height:57px;background:#f0f0f0;border:1px solid #c0c0c0;border-right:2px solid #7a7a7a;border-bottom:2px solid #7a7a7a;border-radius:0 0 3px 0"></div>
<div class="t" style="left:1231px;width:26px;overflow:hidden;top:99px;font-size:12px;color:#111;padding-left:4px">osc</div>
<div class="a" style="left:1231px;top:136px;width:24px;height:52px;background:#f0f0f0;border:1px solid #c0c0c0;border-right:2px solid #7a7a7a;border-bottom:2px solid #7a7a7a;border-radius:0 0 3px 0"></div>
<div class="t" style="left:1231px;width:26px;overflow:hidden;top:156px;font-size:12px;color:#111;padding-left:4px">car</div>
<div class="a" style="left:1229px;top:188px;width:27px;height:58px;background:#f0f0f0;border-top:1px solid #fff;border-bottom:2px solid #888"></div>
<div class="t" style="left:1231px;width:26px;overflow:hidden;top:211px;font-size:12px;color:#111;padding-left:0px">Rec</div>
<div class="a" style="left:1231px;top:327px;width:24px;height:42px;background:#f0f0f0;border:1px solid #c0c0c0;border-right:2px solid #7a7a7a;border-bottom:2px solid #7a7a7a;border-radius:0 0 3px 0"></div>
<div class="t" style="left:1231px;width:26px;overflow:hidden;top:342px;font-size:12px;color:#111;padding-left:4px">Tri</div>
<div class="a" style="left:1231px;top:372px;width:24px;height:41px;background:#f0f0f0;border:1px solid #c0c0c0;border-right:2px solid #7a7a7a;border-bottom:2px solid #7a7a7a;border-radius:0 0 3px 0"></div>
<div class="t" style="left:1231px;width:26px;overflow:hidden;top:386px;font-size:12px;color:#111;padding-left:4px">Pro</div>
<div class="a" style="left:1231px;top:527px;width:24px;height:43px;background:#f0f0f0;border:1px solid #c0c0c0;border-right:2px solid #7a7a7a;border-bottom:2px solid #7a7a7a;border-radius:0 0 3px 0"></div>
<div class="t" style="left:1231px;width:26px;overflow:hidden;top:542px;font-size:12px;color:#111;padding-left:4px">Lgc</div>
<div class="a" style="left:1231px;top:573px;width:24px;height:42px;background:#f0f0f0;border:1px solid #c0c0c0;border-right:2px solid #7a7a7a;border-bottom:2px solid #7a7a7a;border-radius:0 0 3px 0"></div>
<div class="t" style="left:1231px;width:26px;overflow:hidden;top:588px;font-size:12px;color:#111;padding-left:4px">Dif</div>
<div class="a" style="left:1231px;top:618px;width:24px;height:42px;background:#f0f0f0;border:1px solid #c0c0c0;border-right:2px solid #7a7a7a;border-bottom:2px solid #7a7a7a;border-radius:0 0 3px 0"></div>
<div class="t" style="left:1231px;width:26px;overflow:hidden;top:633px;font-size:12px;color:#111;padding-left:4px">Pro</div>
<div class="t" style="left:1231px;top:297px;font-size:12px;color:#111;font-weight:normal;">chA</div>
<div class="t" style="left:1231px;top:497px;font-size:12px;color:#111;font-weight:normal;">chB</div>
<div class="a" style="left:836px;top:684px;width:352px;height:56px;background:#4f4f4f;border-radius:6px 0 0 6px"></div>
<div class="a" style="left:964px;top:684px;width:1px;height:56px;background:#6a6a6a"></div>
<div class="a" style="left:1093px;top:684px;width:1px;height:56px;background:#6a6a6a"></div>
<div class="a" style="left:1188px;top:684px;width:70px;height:56px;background:#1f1f25"></div>
<svg style="left:0;top:0" width="1280" height="1024"><path d="M845.0 701.85 L845.5 701.85 L846.0 701.85 L846.5 701.85 L847.0 701.85 L847.5 701.85 L848.0 701.85 L848.5 701.85 L849.0 701.85 L849.5 701.85 L850.0 701.64 L850.5 701.12 L851.0 700.57 L851.5 700.09 L852.0 699.80 L852.5 699.77 L853.0 700.02 L853.5 700.47 L854.0 701.02 L854.5 701.55 L855.0 701.85 L855.5 701.85 L856.0 701.85 L856.5 701.71 L857.0 701.05 L857.5 700.23 L858.0 699.34 L858.5 698.56 L859.0 698.06 L859.5 697.97 L860.0 698.32 L860.5 699.02 L861.0 699.89 L861.5 700.76 L862.0 701.48 L862.5 701.85 L863.0 701.85 L863.5 701.85 L864.0 701.85 L864.5 701.58 L865.0 700.94 L865.5 700.21 L866.0 699.50 L866.5 698.97 L867.0 698.75 L867.5 698.90 L868.0 699.38 L868.5 700.06 L869.0 700.80 L869.5 701.46 L870.0 701.85 L870.5 701.85 L871.0 701.85 L871.5 701.67 L872.0 701.22 L872.5 700.77 L873.0 700.42 L873.5 700.26 L874.0 700.32 L874.5 700.60 L875.0 701.02 L875.5 701.48 L876.0 701.85 L876.5 701.85 L877.0 701.41 L877.5 700.75 L878.0 700.05 L878.5 699.43 L879.0 699.03 L879.5 698.97 L880.0 699.25 L880.5 699.80 L881.0 700.49 L881.5 701.17 L882.0 701.75 L882.5 701.85 L883.0 701.85 L883.5 701.34 L884.0 700.63 L884.5 699.85 L885.0 699.15 L885.5 698.68 L886.0 698.56 L886.5 698.82 L887.0 699.41 L887.5 700.16 L888.0 700.92 L888.5 701.58 L889.0 701.85 L889.5 701.85 L890.0 701.85 L890.5 701.54 L891.0 700.80 L891.5 699.89 L892.0 698.93 L892.5 698.11 L893.0 697.63 L893.5 697.60 L894.0 698.04 L894.5 698.83 L895.0 699.78 L895.5 700.70 L896.0 701.47 L896.5 701.85 L897.0 701.85 L897.5 701.85 L898.0 701.85 L898.5 701.85 L899.0 701.49 L899.5 700.84 L900.0 700.10 L900.5 699.41 L901.0 698.92 L901.5 698.75 L902.0 698.95 L902.5 699.47 L903.0 700.17 L903.5 700.91 L904.0 701.55 L904.5 701.85 L905.0 701.85 L905.5 701.85 L905.5 703.65 L905.0 703.65 L904.5 703.65 L904.0 703.95 L903.5 704.59 L903.0 705.33 L902.5 706.03 L902.0 706.55 L901.5 706.75 L901.0 706.58 L900.5 706.09 L900.0 705.40 L899.5 704.66 L899.0 704.01 L898.5 703.65 L898.0 703.65 L897.5 703.65 L897.0 703.65 L896.5 703.65 L896.0 704.03 L895.5 704.80 L895.0 705.72 L894.5 706.67 L894.0 707.46 L893.5 707.90 L893.0 707.87 L892.5 707.39 L892.0 706.57 L891.5 705.61 L891.0 704.70 L890.5 703.96 L890.0 703.65 L889.5 703.65 L889.0 703.65 L888.5 703.92 L888.0 704.58 L887.5 705.34 L887.0 706.09 L886.5 706.68 L886.0 706.94 L885.5 706.82 L885.0 706.35 L884.5 705.65 L884.0 704.87 L883.5 704.16 L883.0 703.65 L882.5 703.65 L882.0 703.75 L881.5 704.33 L881.0 705.01 L880.5 705.70 L880.0 706.25 L879.5 706.53 L879.0 706.47 L878.5 706.07 L878.0 705.45 L877.5 704.75 L877.0 704.09 L876.5 703.65 L876.0 703.65 L875.5 704.02 L875.0 704.48 L874.5 704.90 L874.0 705.18 L873.5 705.24 L873.0 705.08 L872.5 704.73 L872.0 704.28 L871.5 703.83 L871.0 703.65 L870.5 703.65 L870.0 703.65 L869.5 704.04 L869.0 704.70 L868.5 705.44 L868.0 706.12 L867.5 706.60 L867.0 706.75 L866.5 706.53 L866.0 706.00 L865.5 705.29 L865.0 704.56 L864.5 703.92 L864.0 703.65 L863.5 703.65 L863.0 703.65 L862.5 703.65 L862.0 704.02 L861.5 704.74 L861.0 705.61 L860.5 706.48 L860.0 707.18 L859.5 707.53 L859.0 707.44 L858.5 706.94 L858.0 706.16 L857.5 705.27 L857.0 704.45 L856.5 703.79 L856.0 703.65 L855.5 703.65 L855.0 703.65 L854.5 703.95 L854.0 704.48 L853.5 705.03 L853.0 705.48 L852.5 705.73 L852.0 705.70 L851.5 705.41 L851.0 704.93 L850.5 704.38 L850.0 703.86 L849.5 703.65 L849.0 703.65 L848.5 703.65 L848.0 703.65 L847.5 703.65 L847.0 703.65 L846.5 703.65 L846.0 703.65 L845.5 703.65 L845.0 703.65Z" fill="#f4ae10"/><path d="M983.0 700.80 L983.5 700.80 L984.0 700.54 L984.5 700.13 L985.0 699.78 L985.5 699.56 L986.0 699.50 L986.5 699.63 L987.0 699.91 L987.5 700.29 L988.0 699.84 L988.5 698.84 L989.0 697.71 L989.5 696.59 L990.0 695.66 L990.5 695.11 L991.0 695.03 L991.5 695.46 L992.0 696.30 L992.5 697.39 L993.0 698.54 L993.5 699.58 L994.0 699.22 L994.5 697.79 L995.0 696.09 L995.5 694.29 L996.0 692.65 L996.5 691.48 L997.0 691.00 L997.5 691.33 L998.0 692.38 L998.5 693.94 L999.0 695.74 L999.5 697.48 L1000.0 698.97 L1000.5 700.11 L1001.0 699.48 L1001.5 698.25 L1002.0 696.83 L1002.5 695.36 L1003.0 694.09 L1003.5 693.25 L1004.0 693.01 L1004.5 693.42 L1005.0 694.39 L1005.5 695.74 L1006.0 697.21 L1006.5 698.60 L1007.0 699.76 L1007.5 700.63 L1008.0 700.80 L1008.5 700.80 L1009.0 700.41 L1009.5 699.85 L1010.0 699.29 L1010.5 698.82 L1011.0 698.55 L1011.5 698.52 L1012.0 698.74 L1012.5 699.16 L1013.0 699.70 L1013.5 699.34 L1014.0 698.17 L1014.5 696.86 L1015.0 695.60 L1015.5 694.61 L1016.0 694.06 L1016.5 694.09 L1017.0 694.67 L1017.5 695.70 L1018.0 696.97 L1018.5 698.27 L1019.0 699.43 L1019.5 700.36 L1020.0 700.54 L1020.5 699.60 L1021.0 698.34 L1021.5 696.81 L1022.0 695.17 L1022.5 693.66 L1023.0 692.53 L1023.5 692.02 L1024.0 692.23 L1024.5 693.11 L1025.0 694.50 L1025.5 696.12 L1026.0 697.71 L1026.5 699.10 L1027.0 700.18 L1027.5 700.17 L1028.0 699.05 L1028.5 697.58 L1029.0 695.85 L1029.5 694.06 L1030.0 692.47 L1030.5 691.37 L1031.0 691.00 L1031.5 691.43 L1032.0 692.56 L1032.5 694.17 L1033.0 695.97 L1033.5 697.69 L1034.0 699.14 L1034.5 700.23 L1035.0 700.80 L1035.5 700.79 L1036.0 699.98 L1036.5 698.89 L1037.0 697.55 L1037.5 696.07 L1038.0 694.68 L1038.5 693.60 L1039.0 693.04 L1039.5 693.14 L1040.0 693.85 L1040.5 695.04 L1041.0 696.49 L1041.5 697.94 L1042.0 699.22 L1042.5 700.24 L1043.0 700.80 L1043.5 700.80 L1043.5 703.20 L1043.0 703.20 L1042.5 703.76 L1042.0 704.78 L1041.5 706.06 L1041.0 707.51 L1040.5 708.96 L1040.0 710.15 L1039.5 710.86 L1039.0 710.96 L1038.5 710.40 L1038.0 709.32 L1037.5 707.93 L1037.0 706.45 L1036.5 705.11 L1036.0 704.02 L1035.5 703.21 L1035.0 703.20 L1034.5 703.77 L1034.0 704.86 L1033.5 706.31 L1033.0 708.03 L1032.5 709.83 L1032.0 711.44 L1031.5 712.57 L1031.0 713.00 L1030.5 712.63 L1030.0 711.53 L1029.5 709.94 L1029.0 708.15 L1028.5 706.42 L1028.0 704.95 L1027.5 703.83 L1027.0 703.82 L1026.5 704.90 L1026.0 706.29 L1025.5 707.88 L1025.0 709.50 L1024.5 710.89 L1024.0 711.77 L1023.5 711.98 L1023.0 711.47 L1022.5 710.34 L1022.0 708.83 L1021.5 707.19 L1021.0 705.66 L1020.5 704.40 L1020.0 703.46 L1019.5 703.64 L1019.0 704.57 L1018.5 705.73 L1018.0 707.03 L1017.5 708.30 L1017.0 709.33 L1016.5 709.91 L1016.0 709.94 L1015.5 709.39 L1015.0 708.40 L1014.5 707.14 L1014.0 705.83 L1013.5 704.66 L1013.0 704.30 L1012.5 704.84 L1012.0 705.26 L1011.5 705.48 L1011.0 705.45 L1010.5 705.18 L1010.0 704.71 L1009.5 704.15 L1009.0 703.59 L1008.5 703.20 L1008.0 703.20 L1007.5 703.37 L1007.0 704.24 L1006.5 705.40 L1006.0 706.79 L1005.5 708.26 L1005.0 709.61 L1004.5 710.58 L1004.0 710.99 L1003.5 710.75 L1003.0 709.91 L1002.5 708.64 L1002.0 707.17 L1001.5 705.75 L1001.0 704.52 L1000.5 703.89 L1000.0 705.03 L999.5 706.52 L999.0 708.26 L998.5 710.06 L998.0 711.62 L997.5 712.67 L997.0 713.00 L996.5 712.52 L996.0 711.35 L995.5 709.71 L995.0 707.91 L994.5 706.21 L994.0 704.78 L993.5 704.42 L993.0 705.46 L992.5 706.61 L992.0 707.70 L991.5 708.54 L991.0 708.97 L990.5 708.89 L990.0 708.34 L989.5 707.41 L989.0 706.29 L988.5 705.16 L988.0 704.16 L987.5 703.71 L987.0 704.09 L986.5 704.37 L986.0 704.50 L985.5 704.44 L985.0 704.22 L984.5 703.87 L984.0 703.46 L983.5 703.20 L983.0 703.20Z" fill="#f4ae10"/><path d="M1105.0 702.20 L1105.5 702.20 L1106.0 702.20 L1106.5 702.20 L1107.0 702.20 L1107.5 702.15 L1108.0 701.83 L1108.5 701.59 L1109.0 701.50 L1109.5 701.59 L1110.0 701.83 L1110.5 702.15 L1111.0 702.20 L1111.5 702.20 L1112.0 702.20 L1112.5 702.20 L1113.0 702.20 L1113.5 702.20 L1114.0 702.20 L1114.5 702.20 L1115.0 702.20 L1115.5 702.20 L1116.0 701.82 L1116.5 701.18 L1117.0 700.51 L1117.5 699.99 L1118.0 699.80 L1118.5 699.99 L1119.0 700.51 L1119.5 701.18 L1120.0 701.82 L1120.5 702.20 L1121.0 702.20 L1121.5 702.20 L1122.0 702.20 L1122.5 702.20 L1123.0 702.20 L1123.5 702.20 L1124.0 702.19 L1124.5 701.75 L1125.0 701.29 L1125.5 700.93 L1126.0 700.80 L1126.5 700.93 L1127.0 701.29 L1127.5 701.75 L1128.0 702.19 L1128.5 702.20 L1129.0 702.20 L1129.5 702.20 L1130.0 702.20 L1130.5 702.20 L1131.0 702.20 L1131.5 702.20 L1132.0 702.20 L1132.5 702.20 L1133.0 701.99 L1133.5 701.78 L1134.0 701.70 L1134.5 701.78 L1135.0 701.99 L1135.5 702.20 L1136.0 702.20 L1136.5 702.20 L1137.0 702.20 L1137.5 702.20 L1138.0 702.20 L1138.5 702.20 L1139.0 702.20 L1139.5 702.20 L1140.0 702.20 L1140.5 701.86 L1141.0 701.44 L1141.5 701.12 L1142.0 701.00 L1142.5 701.12 L1143.0 701.44 L1143.5 701.86 L1144.0 702.20 L1144.5 702.20 L1145.0 702.20 L1145.5 702.20 L1146.0 702.20 L1146.5 702.20 L1147.0 702.20 L1147.5 702.20 L1148.0 701.90 L1148.5 701.29 L1149.0 700.66 L1149.5 700.18 L1150.0 700.00 L1150.5 700.18 L1151.0 700.66 L1151.5 701.29 L1152.0 701.90 L1152.5 702.20 L1153.0 702.20 L1153.5 702.20 L1154.0 702.20 L1154.5 702.20 L1155.0 702.20 L1155.5 702.20 L1156.0 701.82 L1156.5 701.18 L1157.0 700.51 L1157.5 699.99 L1158.0 699.80 L1158.5 699.99 L1159.0 700.51 L1159.5 701.18 L1160.0 701.82 L1160.5 702.20 L1161.0 702.20 L1161.5 702.20 L1162.0 702.20 L1162.5 701.86 L1163.0 701.44 L1163.5 701.12 L1164.0 701.00 L1164.5 701.12 L1165.0 701.44 L1165.5 701.86 L1166.0 702.20 L1166.0 703.80 L1165.5 704.14 L1165.0 704.56 L1164.5 704.88 L1164.0 705.00 L1163.5 704.88 L1163.0 704.56 L1162.5 704.14 L1162.0 703.80 L1161.5 703.80 L1161.0 703.80 L1160.5 703.80 L1160.0 704.18 L1159.5 704.82 L1159.0 705.49 L1158.5 706.01 L1158.0 706.20 L1157.5 706.01 L1157.0 705.49 L1156.5 704.82 L1156.0 704.18 L1155.5 703.80 L1155.0 703.80 L1154.5 703.80 L1154.0 703.80 L1153.5 703.80 L1153.0 703.80 L1152.5 703.80 L1152.0 704.10 L1151.5 704.71 L1151.0 705.34 L1150.5 705.82 L1150.0 706.00 L1149.5 705.82 L1149.0 705.34 L1148.5 704.71 L1148.0 704.10 L1147.5 703.80 L1147.0 703.80 L1146.5 703.80 L1146.0 703.80 L1145.5 703.80 L1145.0 703.80 L1144.5 703.80 L1144.0 703.80 L1143.5 704.14 L1143.0 704.56 L1142.5 704.88 L1142.0 705.00 L1141.5 704.88 L1141.0 704.56 L1140.5 704.14 L1140.0 703.80 L1139.5 703.80 L1139.0 703.80 L1138.5 703.80 L1138.0 703.80 L1137.5 703.80 L1137.0 703.80 L1136.5 703.80 L1136.0 703.80 L1135.5 703.80 L1135.0 704.01 L1134.5 704.22 L1134.0 704.30 L1133.5 704.22 L1133.0 704.01 L1132.5 703.80 L1132.0 703.80 L1131.5 703.80 L1131.0 703.80 L1130.5 703.80 L1130.0 703.80 L1129.5 703.80 L1129.0 703.80 L1128.5 703.80 L1128.0 703.81 L1127.5 704.25 L1127.0 704.71 L1126.5 705.07 L1126.0 705.20 L1125.5 705.07 L1125.0 704.71 L1124.5 704.25 L1124.0 703.81 L1123.5 703.80 L1123.0 703.80 L1122.5 703.80 L1122.0 703.80 L1121.5 703.80 L1121.0 703.80 L1120.5 703.80 L1120.0 704.18 L1119.5 704.82 L1119.0 705.49 L1118.5 706.01 L1118.0 706.20 L1117.5 706.01 L1117.0 705.49 L1116.5 704.82 L1116.0 704.18 L1115.5 703.80 L1115.0 703.80 L1114.5 703.80 L1114.0 703.80 L1113.5 703.80 L1113.0 703.80 L1112.5 703.80 L1112.0 703.80 L1111.5 703.80 L1111.0 703.80 L1110.5 703.85 L1110.0 704.17 L1109.5 704.41 L1109.0 704.50 L1108.5 704.41 L1108.0 704.17 L1107.5 703.85 L1107.0 703.80 L1106.5 703.80 L1106.0 703.80 L1105.5 703.80 L1105.0 703.80Z" fill="#f4ae10"/></svg>
<div class="t" style="left:851px;top:720px;font-size:13px;color:#fff;font-weight:normal;">Normal</div>
<div class="t" style="left:979px;top:720px;font-size:13px;color:#fff;font-weight:normal;letter-spacing:-0.35px">Peak-Detect</div>
<div class="t" style="left:1110px;top:720px;font-size:13px;color:#fff;font-weight:normal;letter-spacing:-0.45px">High-Res</div>
<div class="a" style="left:897px;top:721px;width:12px;height:12px;border-radius:50%;background:radial-gradient(circle at 50% 40%,#f0f0f0,#b8b8b8)"></div>
<div class="a" style="left:1050px;top:721px;width:12px;height:12px;border-radius:50%;background:radial-gradient(circle,#3a8ac0 0 3px,#1a4a70 3.5px 4px,#e8f0f8 4.5px)"></div>
<div class="a" style="left:1163px;top:721px;width:12px;height:12px;border-radius:50%;background:radial-gradient(circle at 50% 40%,#f0f0f0,#b8b8b8)"></div>
<div class="a" style="left:1194px;top:693px;width:15px;height:15px;border-radius:50%;background:radial-gradient(circle at 50% 35%,#3a4048,#101418);box-shadow:0 1px 1px #555"></div>
<div class="a" style="left:1195px;top:720px;width:13px;height:13px;border-radius:50%;background:radial-gradient(circle at 50% 40%,#f4f8ff,#b8d0f0);box-shadow:0 0 5px 2px #3a5aa8"></div>
<div class="t" style="left:1217px;top:694px;font-size:12px;color:#d4d4d4;font-weight:bold;letter-spacing:0.7px">Sine</div>
<div class="t" style="left:1217px;top:720px;font-size:12px;color:#d0d0d0;font-weight:bold;letter-spacing:0.6px">Linear</div>
<div class="a" style="left:837px;top:743px;width:51px;height:52px;border:1px solid #9a9a9a;border-radius:3px;background:#f0f0f0"></div>
<div class="a" style="left:891px;top:743px;width:52px;height:52px;border:1px solid #9a9a9a;border-radius:3px;background:#f0f0f0"></div>
<div class="a" style="left:946px;top:743px;width:51px;height:52px;border:1px solid #9a9a9a;border-radius:3px;background:#f0f0f0"></div>
<div class="a" style="left:948px;top:745px;width:47px;height:48px;background:#fff"></div>
<svg style="left:0;top:0" width="1280" height="1024"><path d="M844 790 V748 M841 752 L844 747 L847 752 M841 786 H882 M878 783 L883 786 L878 789" stroke="#111" stroke-width="1.5" fill="none"/><rect x="848" y="753" width="6" height="33" fill="#7a7a7a"/><rect x="848" y="753" width="6" height="13" fill="#454545"/><rect x="858" y="759" width="6" height="27" fill="#7a7a7a"/><rect x="858" y="759" width="6" height="11" fill="#6a6a6a"/><rect x="868" y="766" width="6" height="20" fill="#4a4a4a"/><rect x="868" y="766" width="6" height="9" fill="#bcbcbc"/><rect x="914.3" y="746.7" width="4.4" height="6" rx="1.5" fill="#000" transform="rotate(0 916.5 768.5)"/><rect x="914.3" y="746.7" width="4.4" height="6" rx="1.5" fill="#000" transform="rotate(20 916.5 768.5)"/><rect x="914.3" y="746.7" width="4.4" height="6" rx="1.5" fill="#000" transform="rotate(40 916.5 768.5)"/><rect x="914.3" y="746.7" width="4.4" height="6" rx="1.5" fill="#000" transform="rotate(60 916.5 768.5)"/><rect x="914.3" y="746.7" width="4.4" height="6" rx="1.5" fill="#000" transform="rotate(80 916.5 768.5)"/><rect x="914.3" y="746.7" width="4.4" height="6" rx="1.5" fill="#000" transform="rotate(100 916.5 768.5)"/><rect x="914.3" y="746.7" width="4.4" height="6" rx="1.5" fill="#000" transform="rotate(120 916.5 768.5)"/><rect x="914.3" y="746.7" width="4.4" height="6" rx="1.5" fill="#000" transform="rotate(140 916.5 768.5)"/><rect x="914.3" y="746.7" width="4.4" height="6" rx="1.5" fill="#000" transform="rotate(160 916.5 768.5)"/><rect x="914.3" y="746.7" width="4.4" height="6" rx="1.5" fill="#000" transform="rotate(180 916.5 768.5)"/><rect x="914.3" y="746.7" width="4.4" height="6" rx="1.5" fill="#000" transform="rotate(200 916.5 768.5)"/><rect x="914.3" y="746.7" width="4.4" height="6" rx="1.5" fill="#000" transform="rotate(220 916.5 768.5)"/><rect x="914.3" y="746.7" width="4.4" height="6" rx="1.5" fill="#000" transform="rotate(240 916.5 768.5)"/><rect x="914.3" y="746.7" width="4.4" height="6" rx="1.5" fill="#000" transform="rotate(260 916.5 768.5)"/><rect x="914.3" y="746.7" width="4.4" height="6" rx="1.5" fill="#000" transform="rotate(280 916.5 768.5)"/><rect x="914.3" y="746.7" width="4.4" height="6" rx="1.5" fill="#000" transform="rotate(300 916.5 768.5)"/><rect x="914.3" y="746.7" width="4.4" height="6" rx="1.5" fill="#000" transform="rotate(320 916.5 768.5)"/><rect x="914.3" y="746.7" width="4.4" height="6" rx="1.5" fill="#000" transform="rotate(340 916.5 768.5)"/><circle cx="916.5" cy="768.5" r="17" fill="#fff" stroke="#000" stroke-width="4"/><circle cx="916.5" cy="768.5" r="15" fill="#f0f0f0"/><g stroke="#000" stroke-width="2"><line x1="906" y1="762" x2="927" y2="762"/><line x1="906" y1="768" x2="927" y2="768"/><line x1="906" y1="774.5" x2="927" y2="774.5"/></g><g fill="#000"><circle cx="910" cy="762" r="2.6"/><circle cx="922" cy="768" r="2.6"/><circle cx="914" cy="774.5" r="2.6"/></g><path d="M953 766 L958 763 L963 762 L968 765 L974 759 L980 763 L985 765 L988 763 L990 764 V787 H953Z" fill="#2a7a8c"/><path d="M953 772 L958 770 L963 773 L968 772 L972 769.5 L976 773 L981 772 L986 774 L990 773 V787 H953Z" fill="#e24a2c"/><path d="M953 777 L959 776 L964 777.5 L969 776 L975 774 L980 777 L986 778 L990 777 V787 H953Z" fill="#f4ae30"/><path d="M954 790 V749 M951.5 753 L954 748 L956.5 753 M953 787.5 H992 M988 785 L993 787.5 L988 790" stroke="#111" stroke-width="1.3" fill="none"/></svg>
<div class="a" style="left:1001px;top:743px;width:188px;height:52px;border:1px solid #9a9a9a;border-radius:3px;background:#f0f0f0"></div>
<div class="t" style="left:1001px;width:188px;text-align:center;top:762px;font-size:12px;color:#111">PWM: 50% | 1,000kHz</div>
<div class="a" style="left:1192px;top:744px;width:65px;height:51px;border:1px solid #9a9a9a;border-radius:3px;background:#fee4b6"></div>
<div class="t" style="left:1192px;width:65px;text-align:center;top:762px;font-size:13px;color:#111">Reset</div>
<svg style="left:1005px;top:800px" width="90" height="95"><defs><filter id="nub"><feGaussianBlur stdDeviation="2"/></filter><radialGradient id="nug" cx="50%" cy="50%" r="50%"><stop offset="0.8" stop-color="#fff"/><stop offset="1" stop-color="#e4e4e4"/></radialGradient></defs>
<path d="M47 84 L85 65 L80 75 L50 86Z" fill="#909090" opacity="0.55" filter="url(#nub)"/>
<circle cx="42" cy="41" r="27.3" fill="url(#nug)" stroke="#e0101a" stroke-width="6.2"/>
<path d="M32 65 L42 85 L52 65Z" fill="#e0101a"/>
<text x="23.5" y="44.5" textLength="37" lengthAdjust="spacingAndGlyphs" font-family="Liberation Sans" font-weight="bold" font-size="14" fill="#000">NEW</text>
<text x="23.5" y="52.5" textLength="37" lengthAdjust="spacingAndGlyphs" font-family="Liberation Sans" font-weight="bold" font-size="8.5" fill="#000">UPDATE</text></svg>
<div class="a" style="left:836px;top:895px;width:440px;height:61px;background:#7c7c7c"></div>
<div class="a" style="left:836px;top:895px;width:7px;height:61px;background:#8e8e8e"></div>
<div class="a" style="left:843px;top:897px;width:245px;height:55px;background:#474747"></div>
<div class="a" style="left:845px;top:904px;width:242px;height:47px;border:2px solid #fff;border-radius:3px"></div>
<div class="a" style="left:851px;top:897px;width:124px;height:14px;background:#474747"></div>
<div class="t" style="left:853px;top:899px;font-size:12px;color:#fff;font-weight:normal;">Waveform refresh rate</div>
<div class="a" style="left:857px;top:935px;width:162px;height:5px;background:linear-gradient(180deg,#f4f4f4,#d8d8d8)"></div>
<svg style="left:943px;top:929px" width="10" height="16"><path d="M1 1 H8 V11 L4.5 15 L1 11Z" fill="#e8e8e8" stroke="#999" stroke-width="0.8"/></svg>
<div class="t" style="left:1024px;top:910px;font-size:12px;color:#fff;font-weight:normal;">10</div>
<svg style="left:1022px;top:914px" width="60" height="30"><path d="M2 11 H22 V1 L50 20 H2Z" fill="#fff"/><path d="M2 23 H48 L56 27 H2Z" fill="#fff"/></svg>
<div class="a" style="left:1103px;top:900px;width:149px;height:50px;border-radius:25px;border:2px solid #727272;background:#7e7e7e"></div>
<div class="a" style="left:1109px;top:905px;width:137px;height:40px;border-radius:20px;border:1px solid #6a6a6a;background:linear-gradient(180deg,#858585,#7a7a7a)"></div>
<div class="t" style="left:1103px;width:149px;text-align:center;top:915px;font-size:18px;color:#e4e4e4">Start Device</div>
<div class="a" style="left:1260px;top:55px;width:18px;height:840px;background:#eaeaea;border-left:1px solid #dcdcdc"></div>
<svg style="left:1262px;top:59px" width="14" height="10"><path d="M3 7 L7 3 L11 7Z" fill="#333"/></svg>
<svg style="left:1262px;top:882px" width="14" height="10"><path d="M3 3 L7 7 L11 3Z" fill="#333"/></svg>
<div class="a" style="left:1262px;top:72px;width:15px;height:796px;background:linear-gradient(90deg,#e8e8e8,#f6f6f6 40%,#d6d6d6);border:1px solid #a8a8a8;border-radius:2px"></div>
<svg style="left:1264px;top:464px" width="11" height="10"><path d="M2 2.5 H9 M2 5 H9 M2 7.5 H9" stroke="#6a6a6a" stroke-width="1"/></svg>
<svg style="left:0;top:983px" width="1280" height="41"><defs><linearGradient id="tbg" x1="0" y1="0" x2="1" y2="0"><stop offset="0" stop-color="#5c1c38"/><stop offset="0.17" stop-color="#621e3c"/><stop offset="0.19" stop-color="#2c2430"/><stop offset="0.24" stop-color="#23222b"/><stop offset="0.31" stop-color="#28252e"/><stop offset="0.35" stop-color="#443444"/><stop offset="0.45" stop-color="#4c3a4a"/><stop offset="1" stop-color="#4c3a4a"/></linearGradient></defs><rect x="0" y="0" width="1280" height="41" fill="url(#tbg)"/><filter id="tbl"><feGaussianBlur stdDeviation="2"/></filter><linearGradient id="tbl2" x1="0" y1="0" x2="1" y2="0"><stop offset="0" stop-color="#a4c2ec"/><stop offset="0.35" stop-color="#b4d2f6"/><stop offset="1" stop-color="#a8c0e8"/></linearGradient><linearGradient id="tbl3" x1="0" y1="0" x2="1" y2="0"><stop offset="0" stop-color="#a4acd4"/><stop offset="0.4" stop-color="#9a9cc4"/><stop offset="1" stop-color="#8686a8"/></linearGradient><g filter="url(#tbl)"><path d="M583 45 C610 32 640 12 677 -4 L1290 -4 L1290 45Z" fill="url(#tbl2)"/><path d="M905 45 L950 -4 L1290 -4 L1290 45Z" fill="url(#tbl3)"/><path d="M884 45 L927 -4 L950 -4 L906 45Z" fill="#8a6848"/><path d="M1150 45 C1170 25 1200 10 1250 -4 L1290 -4 L1290 45Z" fill="#787290" opacity="0.7"/></g><rect x="0" y="0" width="1280" height="1.5" fill="#2a2a34" opacity="0.6"/></svg>
<svg style="left:6px;top:985px" width="44" height="40"><defs><radialGradient id="orb" cx="50%" cy="40%" r="60%"><stop offset="0" stop-color="#5ac0f0"/><stop offset="0.6" stop-color="#1a6ab0"/><stop offset="1" stop-color="#0a3a70"/></radialGradient></defs><circle cx="21" cy="19.5" r="18" fill="url(#orb)" stroke="#8ab0d0" stroke-width="0.8"/><path d="M12 12 Q16 10 20 12 L19 19 Q15 17 11 19Z" fill="#f05a28"/><path d="M22 12 Q26 14 30 12 L29 19 Q25 21 21 19Z" fill="#7ac030"/><path d="M11 21 Q15 19 19 21 L18 28 Q14 26 10 28Z" fill="#30a8e8"/><path d="M21 21 Q25 23 29 21 L28 28 Q24 30 20 28Z" fill="#f8c020"/><ellipse cx="21" cy="11" rx="13" ry="7" fill="#fff" opacity="0.25"/></svg>
<svg style="left:72px;top:987px" width="34" height="34"><defs><radialGradient id="ffg" cx="60%" cy="20%" r="80%"><stop offset="0" stop-color="#ffe040"/><stop offset="0.45" stop-color="#ff8a20"/><stop offset="1" stop-color="#e8205a"/></radialGradient></defs><path d="M17 32 C8 32 2 25 2 17 C2 12 4 9 6 7 C6 10 8 12 9 12 C10 8 13 5 18 2 C18 6 22 7 26 10 C30 13 32 17 32 19 C32 26 26 32 17 32Z" fill="url(#ffg)"/><circle cx="17" cy="18" r="6.5" fill="#7a3ad8"/><path d="M9 14 C12 12 16 12 19 14 L14 16Z" fill="#ff9a30"/></svg>
<div class="a" style="left:122px;top:985px;width:53px;height:37px;border-radius:3px;border:1px solid rgba(255,255,255,0.35);background:linear-gradient(160deg,rgba(255,255,255,0.32),rgba(255,255,255,0.08) 60%,rgba(255,255,255,0.18))"></div>
<div class="a" style="left:176px;top:986px;width:4px;height:35px;border-radius:2px;border:1px solid rgba(255,255,255,0.25);background:rgba(255,255,255,0.1)"></div>
<svg style="left:134px;top:989px" width="29" height="29"><circle cx="14.5" cy="14.5" r="13.5" fill="#2da84a"/><path d="M14.5 1 A13.5 13.5 0 0 1 26.2 7.75 L14.5 7.75 A6.75 6.75 0 0 0 8.65 11.1 L2.8 7.75 A13.5 13.5 0 0 1 14.5 1Z" fill="#e0392e"/><path d="M26.2 7.75 A13.5 13.5 0 0 1 14.5 28 L20.35 17.9 A6.75 6.75 0 0 0 20.35 11.1Z" fill="#f8c62a"/><circle cx="14.5" cy="14.5" r="6" fill="#fff"/><circle cx="14.5" cy="14.5" r="4.6" fill="#4a88e8"/></svg>
<div class="a" style="left:184px;top:985px;width:58px;height:37px;border-radius:3px;border:1px solid rgba(255,255,255,0.35);background:linear-gradient(160deg,#8a8890,#5a5860 60%,#6c6a72)"></div>
<svg style="left:196px;top:990px" width="34" height="30"><rect x="2" y="3" width="5" height="3" fill="#3ab03a"/><rect x="11" y="5" width="4" height="2.5" fill="#c03020"/><path d="M1 6 H12 L14 4 H31 V28 H1Z" fill="#f4d888"/><path d="M1 10 H31 V28 H1Z" fill="#f8e4a0"/><rect x="17" y="7" width="3" height="2" fill="#3a8ad0"/><path d="M6 17 H26 V28 H22 V21 H10 V28 H6Z" fill="#6ab4e8"/><rect x="10" y="23" width="12" height="4" fill="#f2c860"/></svg>
<div class="a" style="left:246px;top:985px;width:58px;height:37px;border-radius:3px;border:1px solid rgba(255,255,255,0.5);background:linear-gradient(160deg,#c8c8cc,#9a9a9e 60%,#b4b4b8)"></div>
<svg style="left:254px;top:988px" width="40" height="34"><path d="M5 16 L13 2 L21 16Z" fill="#3aa8f0"/><path d="M20 16 L36 16 L28 30Z" fill="#f06a20"/></svg>
<div class="t" style="left:1066px;top:996px;font-size:12px;color:#e4e8f4;font-weight:normal;">RU</div>
<svg style="left:1094px;top:1000px" width="14" height="10"><path d="M1.5 8 L7 3 L12.5 8Z" fill="#f0f0f0"/></svg>
<svg style="left:1117px;top:996px" width="18" height="18"><path d="M1 6 H5 L10 2 V16 L5 12 H1Z" fill="#f0f0f0" stroke="#555" stroke-width="0.6"/><path d="M12 6 Q14 9 12 12 M14 4 Q17.5 9 14 14" stroke="#f0f0f0" stroke-width="1.5" fill="none"/></svg>
<svg style="left:1141px;top:996px" width="18" height="20"><rect x="1" y="1" width="2" height="17" fill="#f4f4f4"/><path d="M3 2 H9 L10 4 H15 V10 H9 L8 8 H3Z" fill="#f4f4f4"/><circle cx="12.5" cy="13" r="4.5" fill="#e83030"/><path d="M10.5 11 L14.5 15 M14.5 11 L10.5 15" stroke="#fff" stroke-width="1.3"/></svg>
<svg style="left:1166px;top:997px" width="20" height="18"><path d="M2 1 V7 M5 1 V7 M1 7 H6 V9 H4 V16" stroke="#f4f4f4" stroke-width="1.4" fill="none"/><rect x="7" y="3.5" width="11" height="8" fill="#222" stroke="#f4f4f4" stroke-width="1.2"/><path d="M9 15.5 H18 M12.5 11.5 V15.5" stroke="#f4f4f4" stroke-width="1.4"/></svg>
<div class="t" style="left:1213px;top:990px;font-size:12px;color:#f4f4f4;font-weight:normal;">11:26</div>
<div class="t" style="left:1200px;top:1007px;font-size:12px;color:#f4f4f4;font-weight:normal;">03.08.2020</div>
<div class="a" style="left:1267px;top:984px;width:13px;height:40px;border-left:1px solid rgba(255,255,255,0.5);background:linear-gradient(90deg,rgba(255,255,255,0.35),rgba(255,255,255,0.15))"></div>
<div class="a" style="left:814px;top:428px;width:121px;height:18px;background:linear-gradient(180deg,#fff,#e4e5f0);border:1px solid #767676;border-radius:3px;box-shadow:1px 1px 2px rgba(0,0,0,0.25)"></div>
<div class="t" style="left:818px;top:432px;font-size:11px;color:#4c4c4c;font-weight:normal;">Save as Jpg/Bmp/Gif</div>
</body></html>
